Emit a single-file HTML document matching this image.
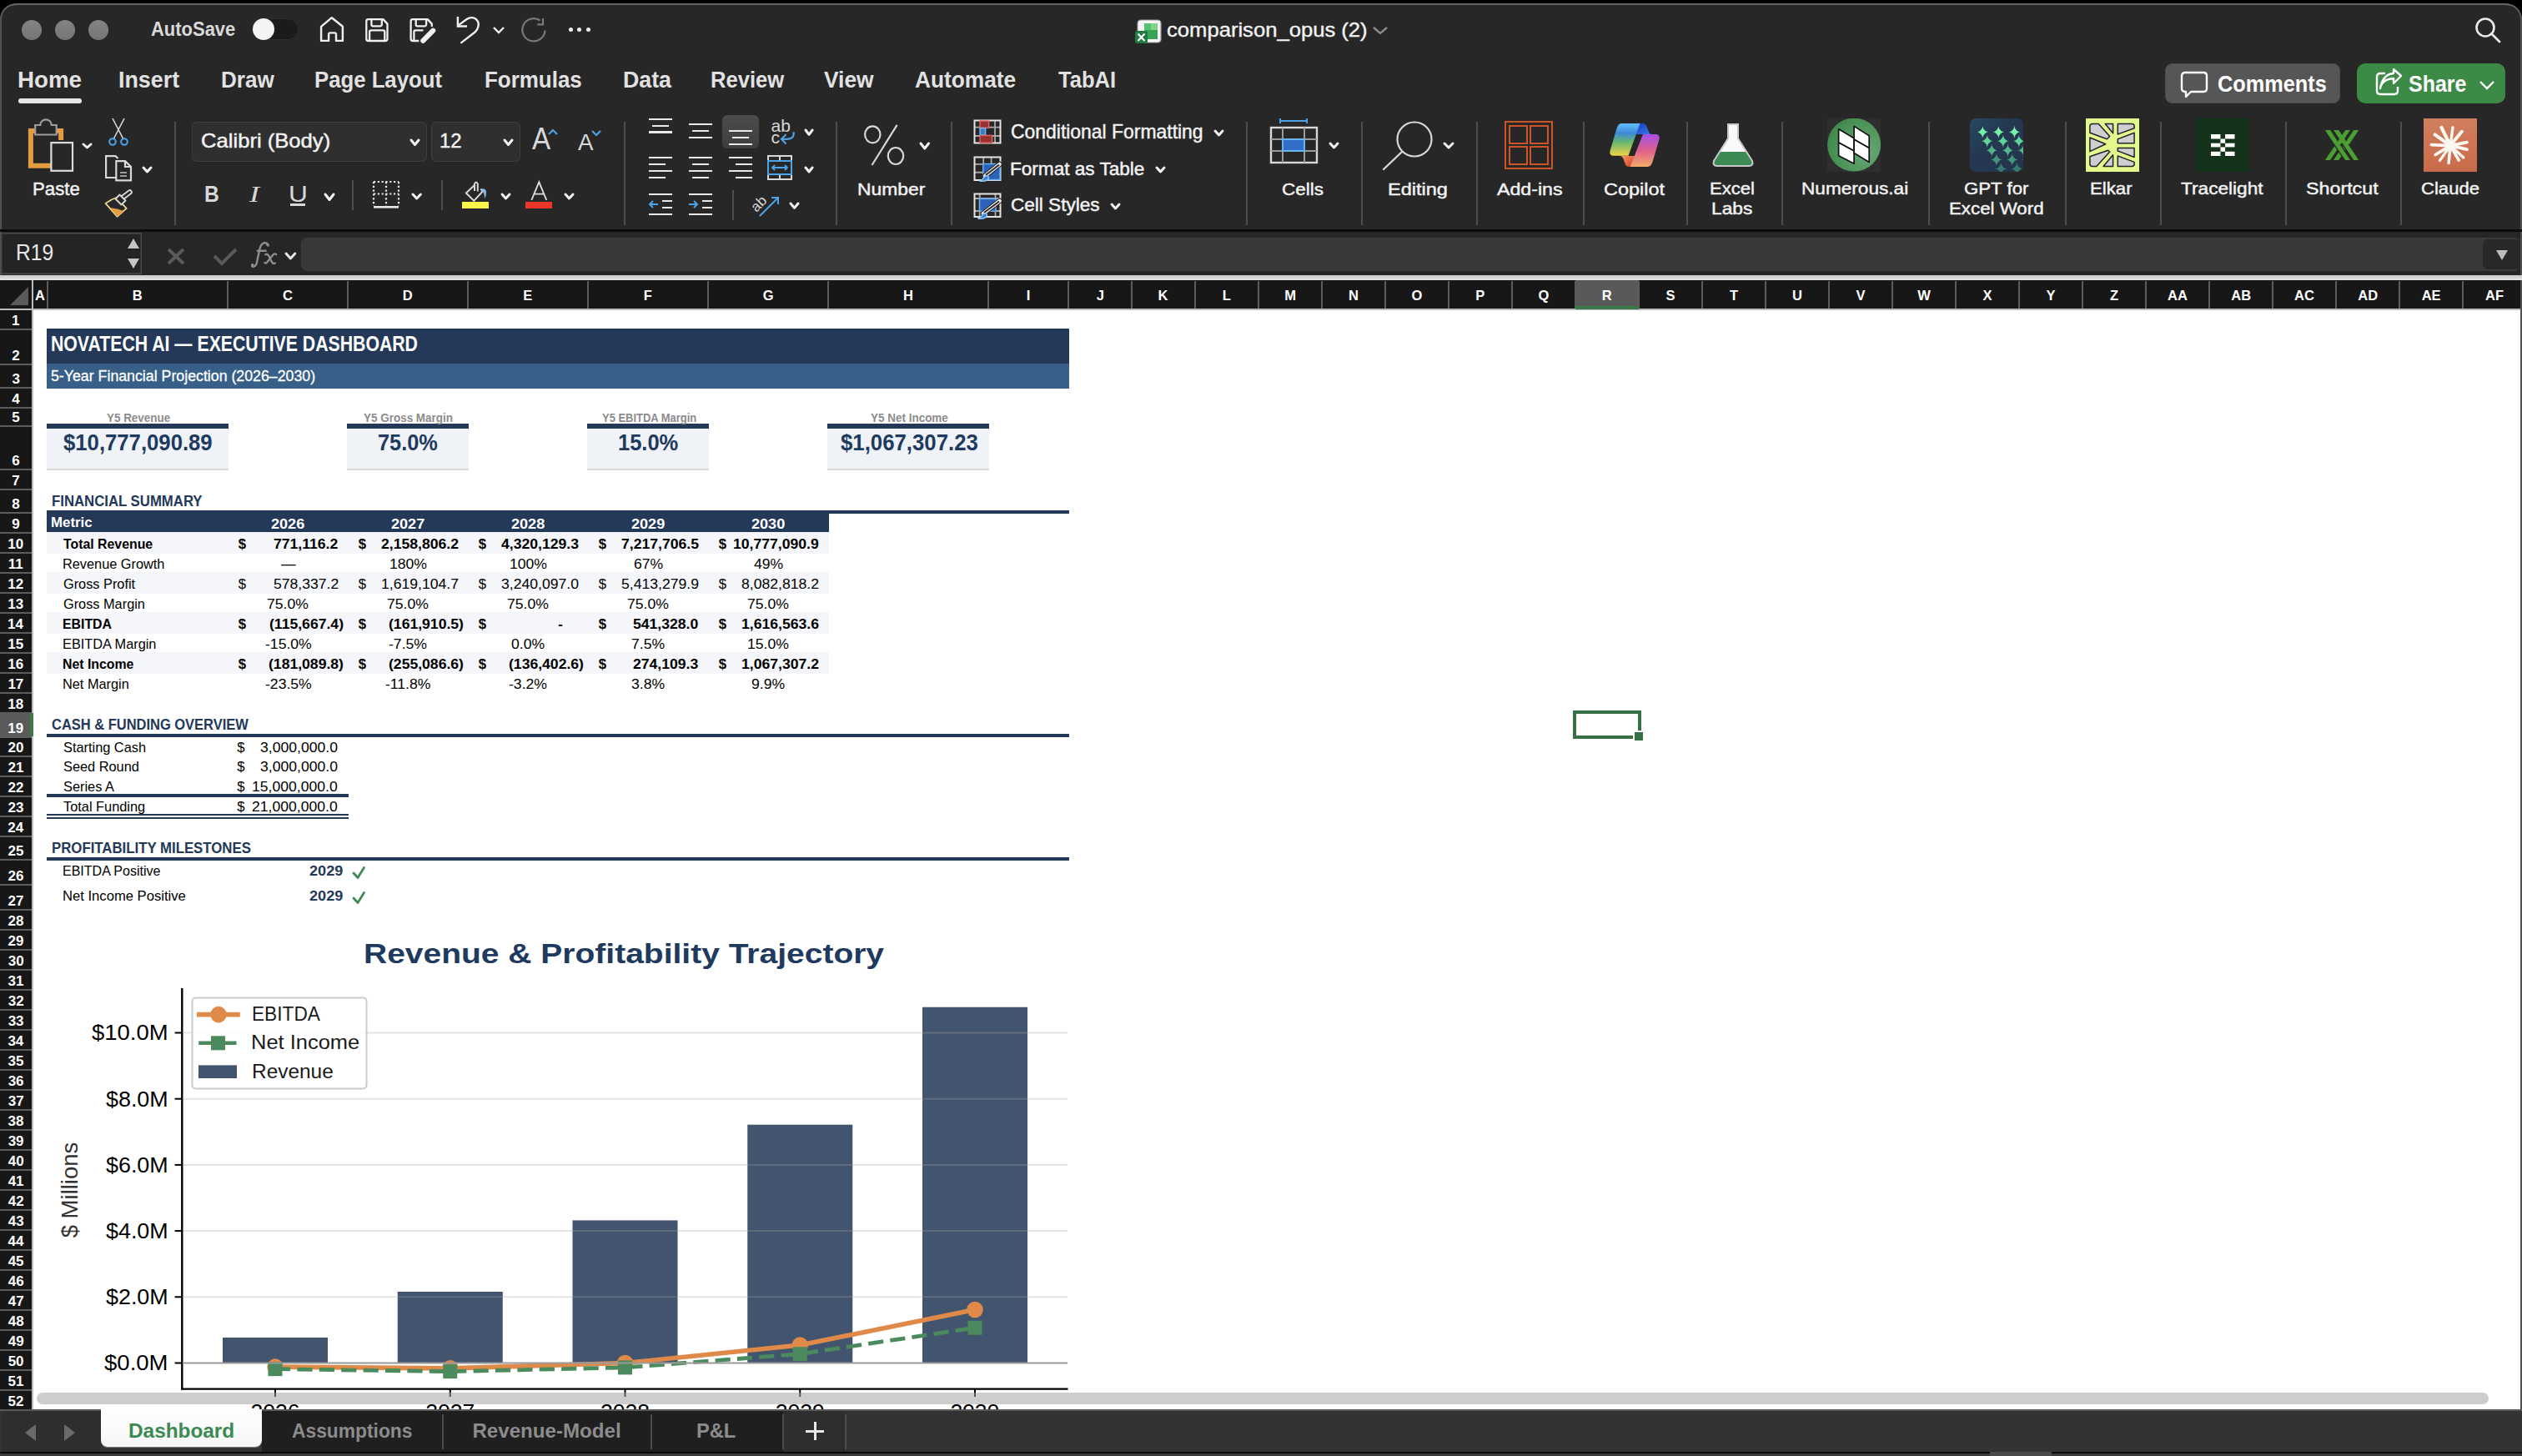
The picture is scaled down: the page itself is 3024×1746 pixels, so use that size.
<!DOCTYPE html>
<html><head><meta charset="utf-8"><style>
html,body{margin:0;padding:0;width:3024px;height:1746px;overflow:hidden;background:#000;}
#w{position:absolute;left:0;top:0;width:3024px;height:1746px;overflow:hidden;}
.t{position:absolute;white-space:pre;font-family:"Liberation Sans",sans-serif;}
.r{position:absolute;}
</style></head><body><div id="w">
<div class="r" style="left:0;top:4px;width:3024px;height:1742px;background:#272727;border-radius:20px 20px 0 0;box-shadow:inset 0 2px 0 #626262, inset 2px 0 0 #505050, inset -2px 0 0 #505050;"></div>
<div class="r" style="left:26px;top:24px;width:24px;height:24px;border-radius:50%;background:linear-gradient(#838383,#767676);"></div>
<div class="r" style="left:66px;top:24px;width:24px;height:24px;border-radius:50%;background:linear-gradient(#838383,#767676);"></div>
<div class="r" style="left:106px;top:24px;width:24px;height:24px;border-radius:50%;background:linear-gradient(#838383,#767676);"></div>
<div class="t" style="left:181.45px;top:24.31px;font-size:23.26px;line-height:23.26px;color:#dadada;font-weight:bold;transform:scaleX(0.9444);transform-origin:0 0;">AutoSave</div>
<div class="r" style="left:302px;top:22px;width:56px;height:26px;border-radius:13px;background:#1b1b1b;box-shadow:inset 0 0 0 1px #2e2e2e;"></div>
<div class="r" style="left:303px;top:22px;width:26px;height:26px;border-radius:50%;background:#f4f4f4;"></div>
<svg class="r" style="left:380.00px;top:18.00px;" width="36.00" height="34.00" viewBox="0 0 36 34"><path d="M5.1 30.9 V13.8 L17.8 3.2 L30.9 13.8 V30.9 H23 V23.2 A1.8 1.8 0 0 0 21.2 21.4 H15.9 A1.8 1.8 0 0 0 14.1 23.2 V30.9 Z" fill="none" stroke="#f0f0f0" stroke-width="2.4" stroke-linejoin="round"/></svg>
<svg class="r" style="left:436.00px;top:20.00px;" width="34.00" height="32.00" viewBox="0 0 34 32"><path d="M5.6 3.1 H23.4 L28.5 8.6 V26.8 A2.2 2.2 0 0 1 26.3 29 H5.6 A2.3 2.3 0 0 1 3.3 26.7 V5.4 A2.3 2.3 0 0 1 5.6 3.1Z M9.4 3.1 V9.5 A1.8 1.8 0 0 0 11.2 11.3 H20 A1.8 1.8 0 0 0 21.8 9.5 V3.1 M7.1 29 V18.2 A1.8 1.8 0 0 1 8.9 16.4 H23.5 A1.8 1.8 0 0 1 25.3 18.2 V29" fill="none" stroke="#f0f0f0" stroke-width="2.3" stroke-linejoin="round"/></svg>
<svg class="r" style="left:490.00px;top:20.00px;" width="36.00" height="34.00" viewBox="0 0 36 34"><path d="M12.5 29 H4.9 A2.3 2.3 0 0 1 2.6 26.7 V5.4 A2.3 2.3 0 0 1 4.9 3.1 H22.7 L27.8 8.6 V12.3 M8.7 3.1 V9.5 A1.8 1.8 0 0 0 10.5 11.3 H19.3 A1.8 1.8 0 0 0 21.1 9.5 V3.1 M6.4 29 V18.2 A1.8 1.8 0 0 1 8.2 16.4 H17.5" fill="none" stroke="#f0f0f0" stroke-width="2.3" stroke-linejoin="round"/><line x1="29.3" y1="16.6" x2="17.2" y2="28.8" stroke="#272727" stroke-width="9.5" stroke-linecap="round"/><line x1="29.3" y1="16.6" x2="17.2" y2="28.8" stroke="#f0f0f0" stroke-width="6" stroke-linecap="round"/></svg>
<svg class="r" style="left:545.00px;top:18.00px;" width="35.00" height="36.00" viewBox="0 0 35 36"><path d="M3.9 2.1 V13.5 H15" fill="none" stroke="#f0f0f0" stroke-width="2.4" stroke-linejoin="miter"/><path d="M4.6 12.4 L14.3 5.3 Q19.3 1.8 24.5 4 Q30 7.5 28.4 14 Q27.4 18 24.5 20.5 L8.2 33.1" fill="none" stroke="#f0f0f0" stroke-width="2.4" stroke-linecap="round"/></svg>
<svg class="r" style="left:590.00px;top:30.00px;" width="16.00" height="13.00" viewBox="0 0 16 13"><path d="M2 3 L8 9 L14 3" fill="none" stroke="#f0f0f0" stroke-width="2.4"/></svg>
<svg class="r" style="left:623.00px;top:20.00px;" width="33.00" height="34.00" viewBox="0 0 33 34"><path d="M30.5 16.5 A13.6 13.6 0 1 1 24.5 4.5" fill="none" stroke="#7a7a7a" stroke-width="2.2"/><path d="M28 1.9 V9.3 H21.2" fill="none" stroke="#7a7a7a" stroke-width="2.2"/></svg>
<div class="r" style="left:681.5px;top:33px;width:5px;height:5px;border-radius:50%;background:#f0f0f0;"></div>
<div class="r" style="left:692.0px;top:33px;width:5px;height:5px;border-radius:50%;background:#f0f0f0;"></div>
<div class="r" style="left:702.5px;top:33px;width:5px;height:5px;border-radius:50%;background:#f0f0f0;"></div>
<svg class="r" style="left:1360.00px;top:22.00px;" width="34.00" height="32.00" viewBox="0 0 34 32"><rect x="4" y="2" width="28" height="27" rx="4" fill="#f5f5f5" stroke="#9a9a9a" stroke-width="1.2"/><rect x="12" y="6" width="16" height="19" fill="#3aa356"/><rect x="20" y="6" width="8" height="8" fill="#7fd48b"/><rect x="12" y="6" width="8" height="8" fill="#56c06a"/><rect x="1" y="15" width="15" height="15" rx="2.5" fill="#1f7a3f"/><path d="M4.5 18.5 L12.5 27 M12.5 18.5 L4.5 27" stroke="#fff" stroke-width="2.2"/></svg>
<div class="t" style="left:1398.91px;top:23.78px;font-size:24.71px;line-height:24.71px;color:#f2f2f2;font-weight:normal;transform:scaleX(1.0369);transform-origin:0 0;-webkit-text-stroke:0.4px #f2f2f2;">comparison_opus (2)</div>
<svg class="r" style="left:1645.00px;top:30.00px;" width="20.00" height="12.00" viewBox="0 0 20 12"><path d="M2 3 L10 10 L18 3" fill="none" stroke="#8c8c8c" stroke-width="2.4"/></svg>
<svg class="r" style="left:2966.00px;top:20.00px;" width="36.00" height="32.00" viewBox="0 0 36 32"><circle cx="14" cy="13" r="10.5" fill="none" stroke="#eaeaea" stroke-width="2.6"/><path d="M21.5 20.5 L31 30" stroke="#eaeaea" stroke-width="2.8" stroke-linecap="round"/></svg>
<div class="t" style="left:20.95px;top:82.25px;font-size:28.05px;line-height:28.05px;color:#e2e2e2;font-weight:bold;transform:scaleX(0.9880);transform-origin:0 0;">Home</div>
<div class="t" style="left:142.20px;top:82.25px;font-size:28.05px;line-height:28.05px;color:#e2e2e2;font-weight:bold;transform:scaleX(0.9572);transform-origin:0 0;">Insert</div>
<div class="t" style="left:265.26px;top:82.25px;font-size:28.05px;line-height:28.05px;color:#e2e2e2;font-weight:bold;transform:scaleX(0.9285);transform-origin:0 0;">Draw</div>
<div class="t" style="left:377.28px;top:82.25px;font-size:28.05px;line-height:28.05px;color:#e2e2e2;font-weight:bold;transform:scaleX(0.9175);transform-origin:0 0;">Page Layout</div>
<div class="t" style="left:581.26px;top:82.25px;font-size:28.05px;line-height:28.05px;color:#e2e2e2;font-weight:bold;transform:scaleX(0.9251);transform-origin:0 0;">Formulas</div>
<div class="t" style="left:746.81px;top:82.25px;font-size:28.05px;line-height:28.05px;color:#e2e2e2;font-weight:bold;transform:scaleX(0.9542);transform-origin:0 0;">Data</div>
<div class="t" style="left:851.79px;top:82.25px;font-size:28.05px;line-height:28.05px;color:#e2e2e2;font-weight:bold;transform:scaleX(0.9119);transform-origin:0 0;">Review</div>
<div class="t" style="left:988.42px;top:82.25px;font-size:28.05px;line-height:28.05px;color:#e2e2e2;font-weight:bold;transform:scaleX(0.9387);transform-origin:0 0;">View</div>
<div class="t" style="left:1097.35px;top:82.25px;font-size:28.05px;line-height:28.05px;color:#e2e2e2;font-weight:bold;transform:scaleX(0.9366);transform-origin:0 0;">Automate</div>
<div class="t" style="left:1268.71px;top:82.25px;font-size:28.05px;line-height:28.05px;color:#e2e2e2;font-weight:bold;transform:scaleX(0.9097);transform-origin:0 0;">TabAI</div>
<div class="r" style="left:22px;top:118px;width:76px;height:6px;border-radius:3px;background:#e6e6e6;"></div>
<div class="r" style="left:2596px;top:76px;width:210px;height:48px;border-radius:9px;background:#565656;box-shadow:inset 0 0 0 1px #4c4c4c;"></div>
<svg class="r" style="left:2614.00px;top:84.00px;" width="36.00" height="34.00" viewBox="0 0 36 34"><path d="M6 3 H28 Q32 3 32 7 V22 Q32 26 28 26 H13 L7 32 V26 H6 Q2 26 2 22 V7 Q2 3 6 3 Z" fill="none" stroke="#fff" stroke-width="2.4" stroke-linejoin="round"/></svg>
<div class="t" style="left:2658.56px;top:87.07px;font-size:27.33px;line-height:27.33px;color:#ffffff;font-weight:bold;transform:scaleX(0.9261);transform-origin:0 0;">Comments</div>
<div class="r" style="left:2826px;top:76px;width:178px;height:48px;border-radius:10px;background:#3d8a47;"></div>
<svg class="r" style="left:2846.00px;top:82.00px;" width="36.00" height="34.00" viewBox="0 0 36 34"><path d="M14 6 H8 Q4 6 4 10 V27 Q4 31 8 31 H25 Q29 31 29 27 V22" fill="none" stroke="#fff" stroke-width="2.4"/><path d="M8 24 Q10 13 24 12 V18 L33 9 L24 1 V6 Q11 7 8 24 Z" fill="none" stroke="#fff" stroke-width="2.4" stroke-linejoin="round"/></svg>
<div class="t" style="left:2888.28px;top:87.07px;font-size:27.33px;line-height:27.33px;color:#ffffff;font-weight:bold;transform:scaleX(0.9134);transform-origin:0 0;">Share</div>
<svg class="r" style="left:2972.00px;top:95.00px;" width="20.00" height="13.00" viewBox="0 0 20 13"><path d="M2 3 L10 11 L18 3" fill="none" stroke="#fff" stroke-width="2.4"/></svg>
<svg class="r" style="left:30.00px;top:140.00px;" width="62.00" height="70.00" viewBox="0 0 62 70"><path d="M43.1 28 V17 H6.9 V58.7 H31" fill="none" stroke="#e39c3f" stroke-width="6"/><path d="M12.2 21.5 H37.7 V10 H31.7 A6.7 6.7 0 0 0 18.3 10 H12.2 Z" fill="#272727" stroke="#9c9c9c" stroke-width="2.2"/><rect x="31.4" y="31.1" width="25.6" height="33.7" fill="#272727" stroke="#dcdcdc" stroke-width="2.2"/></svg>
<svg class="r" style="left:96.50px;top:169.50px;" width="15.00" height="10.00" viewBox="0 0 15 10"><path d="M3 3 L7.5 7 L12 3" fill="none" stroke="#f4f4f4" stroke-width="3" stroke-linecap="round" stroke-linejoin="round"/></svg>
<div class="t" style="left:39.18px;top:215.54px;font-size:21.80px;line-height:21.80px;color:#f2f2f2;font-weight:normal;transform:scaleX(1.0190);transform-origin:0 0;-webkit-text-stroke:0.45px #f2f2f2;">Paste</div>
<svg class="r" style="left:128.00px;top:140.00px;" width="28.00" height="36.00" viewBox="0 0 28 36"><path d="M7 2 L20 27 M21 2 L8 27" stroke="#d8d8d8" stroke-width="1.6" fill="none"/><circle cx="7" cy="30" r="3.8" fill="none" stroke="#4da3e8" stroke-width="2"/><circle cx="21" cy="30" r="3.8" fill="none" stroke="#4da3e8" stroke-width="2"/></svg>
<svg class="r" style="left:124.00px;top:184.00px;" width="36.00" height="36.00" viewBox="0 0 36 36"><path d="M15 29 H3.1 V3.1 H14.5 L17.5 6" fill="none" stroke="#d8d8d8" stroke-width="2.2"/><path d="M15.3 9.1 H26 L33 16 V32.4 H15.3 Z M26 9.1 V16 H33" fill="#272727" stroke="#d8d8d8" stroke-width="2.2"/><path d="M20 23 H28 M20 27 H28" stroke="#9a9a9a" stroke-width="2"/></svg>
<svg class="r" style="left:168.50px;top:197.50px;" width="15.00" height="11.00" viewBox="0 0 15 11"><path d="M3 3 L7.5 8 L12 3" fill="none" stroke="#f4f4f4" stroke-width="3" stroke-linecap="round" stroke-linejoin="round"/></svg>
<svg class="r" style="left:122.00px;top:226.00px;" width="40.00" height="38.00" viewBox="0 0 40 38"><g transform="translate(2 2)"><path d="M2.6 15.9 Q9 11 15.6 9 L27.6 21.9 Q22 27 16.5 31.7 Z" fill="none" stroke="#f2d98c" stroke-width="1.8" stroke-linejoin="round"/><path d="M8 21 Q16 22 24.5 25 L16.5 31.7Z" fill="#e39c3f"/><line x1="23" y1="9" x2="31.5" y2="2.5" stroke="#d8d8d8" stroke-width="6.4" stroke-linecap="round"/><line x1="23" y1="9" x2="31.5" y2="2.5" stroke="#272727" stroke-width="2.8" stroke-linecap="round"/><path d="M14.5 10.5 L19.5 5.5 L26.5 12.5 L21.5 17.5Z" fill="#272727" stroke="#d8d8d8" stroke-width="1.8" stroke-linejoin="round"/></g></svg>
<div class="r" style="left:208.50px;top:146.00px;width:2.00px;height:124.00px;background:#4e4e4e;"></div>
<div class="r" style="left:230px;top:146px;width:282px;height:48px;border-radius:6px;background:#2f2f2f;box-shadow:inset 0 0 0 1px #3e3e3e;"></div>
<div class="t" style="left:241.40px;top:157.18px;font-size:24.13px;line-height:24.13px;color:#f2f2f2;font-weight:normal;transform:scaleX(1.0619);transform-origin:0 0;-webkit-text-stroke:0.45px #f2f2f2;">Calibri (Body)</div>
<svg class="r" style="left:489.50px;top:165.00px;" width="15.00" height="11.50" viewBox="0 0 15 11.5"><path d="M3 3 L7.5 8.5 L12 3" fill="none" stroke="#f4f4f4" stroke-width="3" stroke-linecap="round" stroke-linejoin="round"/></svg>
<div class="r" style="left:516.6px;top:146px;width:107px;height:48px;border-radius:6px;background:#2f2f2f;box-shadow:inset 0 0 0 1px #3e3e3e;"></div>
<div class="t" style="left:526.68px;top:157.08px;font-size:24.71px;line-height:24.71px;color:#f2f2f2;font-weight:normal;transform:scaleX(0.9647);transform-origin:0 0;-webkit-text-stroke:0.45px #f2f2f2;">12</div>
<svg class="r" style="left:601.50px;top:165.00px;" width="15.00" height="11.50" viewBox="0 0 15 11.5"><path d="M3 3 L7.5 8.5 L12 3" fill="none" stroke="#f4f4f4" stroke-width="3" stroke-linecap="round" stroke-linejoin="round"/></svg>
<div class="t" style="left:637.94px;top:149.24px;font-size:36.34px;line-height:36.34px;color:#d8d8d8;font-weight:normal;transform:scaleX(0.9131);transform-origin:0 0;">A</div>
<svg class="r" style="left:656.00px;top:153.00px;" width="14.00" height="10.00" viewBox="0 0 14 10"><path d="M2 8 L7 3 L12 8" fill="none" stroke="#4da3e8" stroke-width="2.2"/></svg>
<div class="t" style="left:692.55px;top:156.01px;font-size:28.34px;line-height:28.34px;color:#d8d8d8;font-weight:normal;transform:scaleX(0.9790);transform-origin:0 0;">A</div>
<svg class="r" style="left:708.00px;top:154.00px;" width="14.00" height="10.00" viewBox="0 0 14 10"><path d="M2 3 L7 8 L12 3" fill="none" stroke="#4da3e8" stroke-width="2.2"/></svg>
<div class="t" style="left:245.35px;top:218.62px;font-size:27.62px;line-height:27.62px;color:#d8d8d8;font-weight:bold;transform:scaleX(0.8906);transform-origin:0 0;">B</div>
<div class="t" style="left:299.14px;top:218.62px;font-size:27.62px;line-height:27.62px;color:#d8d8d8;font-weight:normal;font-style:italic;font-family:'Liberation Serif', serif;transform:scaleX(1.3002);transform-origin:0 0;">I</div>
<div class="t" style="left:345.55px;top:218.62px;font-size:27.62px;line-height:27.62px;color:#d8d8d8;font-weight:normal;transform:scaleX(1.1478);transform-origin:0 0;">U</div>
<div class="r" style="left:348.00px;top:244.00px;width:18.00px;height:2.50px;background:#d8d8d8;"></div>
<svg class="r" style="left:386.50px;top:229.50px;" width="16.00" height="12.50" viewBox="0 0 16 12.5"><path d="M3 3 L8 9.5 L13 3" fill="none" stroke="#f4f4f4" stroke-width="3" stroke-linecap="round" stroke-linejoin="round"/></svg>
<div class="r" style="left:422.00px;top:216.00px;width:2.00px;height:36.00px;background:#4e4e4e;"></div>
<svg class="r" style="left:446.00px;top:216.00px;" width="34.00" height="34.00" viewBox="0 0 34 34"><g fill="#e8e8e8"><rect x="2" y="31" width="30" height="2.6"/></g><g stroke="#e8e8e8" stroke-width="2.2" stroke-dasharray="2.2 2.6" fill="none"><path d="M2 2 H32 M2 2 V31 M32 2 V31 M17 2 V31 M2 16.5 H32"/></g></svg>
<svg class="r" style="left:492.10px;top:229.50px;" width="15.40" height="11.00" viewBox="0 0 15.4 11"><path d="M3 3 L7.7 8 L12.4 3" fill="none" stroke="#f4f4f4" stroke-width="3" stroke-linecap="round" stroke-linejoin="round"/></svg>
<div class="r" style="left:528.50px;top:216.00px;width:2.00px;height:36.00px;background:#4e4e4e;"></div>
<svg class="r" style="left:552.00px;top:212.00px;" width="40.00" height="34.00" viewBox="0 0 40 34"><path d="M16.9 9.9 L6.9 19.4 L16.3 28.8 L26.9 17.2 L24.3 14.6" fill="none" stroke="#d8d8d8" stroke-width="2" stroke-linejoin="miter"/><path d="M17 17 V8.5 Q18.9 4.5 20.8 8.5 V17.6" fill="none" stroke="#d8d8d8" stroke-width="2"/><path d="M24.3 14.6 Q29.8 13.4 31 17.2 Q31.4 22 29.4 26.3 Q28.8 20.5 26.9 17.2 Z" fill="#86b8e8"/></svg>
<div class="r" style="left:554.00px;top:242.00px;width:32.00px;height:8.00px;background:#fdf64a;"></div>
<svg class="r" style="left:598.50px;top:229.50px;" width="15.00" height="11.00" viewBox="0 0 15 11"><path d="M3 3 L7.5 8 L12 3" fill="none" stroke="#f4f4f4" stroke-width="3" stroke-linecap="round" stroke-linejoin="round"/></svg>
<svg class="r" style="left:630.00px;top:214.00px;" width="34.00" height="30.00" viewBox="0 0 34 30"><path d="M7.3 26 L16.3 4.3 L25.3 26 M10.6 18.6 H22" fill="none" stroke="#dcdcdc" stroke-width="1.9"/></svg>
<div class="r" style="left:630.00px;top:242.00px;width:32.00px;height:8.00px;background:#e8362a;"></div>
<svg class="r" style="left:674.50px;top:229.50px;" width="15.00" height="11.00" viewBox="0 0 15 11"><path d="M3 3 L7.5 8 L12 3" fill="none" stroke="#f4f4f4" stroke-width="3" stroke-linecap="round" stroke-linejoin="round"/></svg>
<div class="r" style="left:748.00px;top:146.00px;width:2.00px;height:124.00px;background:#4e4e4e;"></div>
<div class="r" style="left:778.00px;top:141.60px;width:28.00px;height:2.20px;background:#e8e8e8;"></div>
<div class="r" style="left:782.00px;top:149.50px;width:20.00px;height:2.20px;background:#e8e8e8;"></div>
<div class="r" style="left:778.00px;top:157.40px;width:28.00px;height:2.20px;background:#e8e8e8;"></div>
<div class="r" style="left:826.00px;top:147.90px;width:28.00px;height:2.20px;background:#e8e8e8;"></div>
<div class="r" style="left:830.00px;top:155.90px;width:20.00px;height:2.20px;background:#e8e8e8;"></div>
<div class="r" style="left:826.00px;top:163.90px;width:28.00px;height:2.20px;background:#e8e8e8;"></div>
<div class="r" style="left:866px;top:138px;width:44px;height:39.6px;border-radius:6px;background:linear-gradient(#4c4c4c,#3e3e3e);"></div>
<div class="r" style="left:874.00px;top:155.90px;width:28.00px;height:2.20px;background:#e8e8e8;"></div>
<div class="r" style="left:878.00px;top:163.90px;width:20.00px;height:2.20px;background:#e8e8e8;"></div>
<div class="r" style="left:874.00px;top:171.90px;width:28.00px;height:2.20px;background:#e8e8e8;"></div>
<svg class="r" style="left:920.00px;top:138.00px;" width="36.00" height="38.00" viewBox="0 0 36 38"><text x="4.5" y="20" font-family="Liberation Sans" font-size="21" fill="#d8d8d8">ab</text><text x="4.5" y="34.2" font-family="Liberation Sans" font-size="21" fill="#d8d8d8">c</text><path d="M31.5 20.3 Q33 28.8 23 28.8 H17.2 M22.5 23.2 L17 28.8 L22.5 34.4" fill="none" stroke="#4da3e8" stroke-width="2.2"/></svg>
<svg class="r" style="left:963.10px;top:153.10px;" width="14.10" height="11.40" viewBox="0 0 14.1 11.4"><path d="M3 3 L7.05 8.4 L11.1 3" fill="none" stroke="#f4f4f4" stroke-width="3" stroke-linecap="round" stroke-linejoin="round"/></svg>
<div class="r" style="left:778.00px;top:187.90px;width:28.00px;height:2.20px;background:#e8e8e8;"></div>
<div class="r" style="left:778.00px;top:195.90px;width:20.00px;height:2.20px;background:#e8e8e8;"></div>
<div class="r" style="left:778.00px;top:203.90px;width:28.00px;height:2.20px;background:#e8e8e8;"></div>
<div class="r" style="left:778.00px;top:211.90px;width:20.00px;height:2.20px;background:#e8e8e8;"></div>
<div class="r" style="left:826.00px;top:187.90px;width:28.00px;height:2.20px;background:#e8e8e8;"></div>
<div class="r" style="left:830.00px;top:195.90px;width:20.00px;height:2.20px;background:#e8e8e8;"></div>
<div class="r" style="left:826.00px;top:203.90px;width:28.00px;height:2.20px;background:#e8e8e8;"></div>
<div class="r" style="left:830.00px;top:211.90px;width:20.00px;height:2.20px;background:#e8e8e8;"></div>
<div class="r" style="left:874.00px;top:187.90px;width:28.00px;height:2.20px;background:#e8e8e8;"></div>
<div class="r" style="left:882.00px;top:195.90px;width:20.00px;height:2.20px;background:#e8e8e8;"></div>
<div class="r" style="left:874.00px;top:203.90px;width:28.00px;height:2.20px;background:#e8e8e8;"></div>
<div class="r" style="left:882.00px;top:211.90px;width:20.00px;height:2.20px;background:#e8e8e8;"></div>
<svg class="r" style="left:918.00px;top:184.00px;" width="34.00" height="34.00" viewBox="0 0 34 34"><rect x="3" y="3" width="28" height="28" fill="none" stroke="#d8d8d8" stroke-width="2"/><path d="M17 3 V9 M17 25 V31" stroke="#d8d8d8" stroke-width="2"/><rect x="3" y="9" width="28" height="16" fill="none" stroke="#4da3e8" stroke-width="2"/><path d="M8 17 H26 M11 14 L8 17 L11 20 M23 14 L26 17 L23 20" fill="none" stroke="#4da3e8" stroke-width="1.8"/></svg>
<svg class="r" style="left:963.10px;top:197.50px;" width="14.10" height="11.00" viewBox="0 0 14.1 11"><path d="M3 3 L7.05 8 L11.1 3" fill="none" stroke="#f4f4f4" stroke-width="3" stroke-linecap="round" stroke-linejoin="round"/></svg>
<div class="r" style="left:778.00px;top:231.90px;width:28.00px;height:2.20px;background:#e8e8e8;"></div>
<div class="r" style="left:794.00px;top:239.90px;width:12.00px;height:2.20px;background:#e8e8e8;"></div>
<div class="r" style="left:794.00px;top:247.90px;width:12.00px;height:2.20px;background:#e8e8e8;"></div>
<div class="r" style="left:778.00px;top:255.90px;width:28.00px;height:2.20px;background:#e8e8e8;"></div>
<svg class="r" style="left:777.00px;top:239.00px;" width="14.00" height="12.00" viewBox="0 0 14 12"><path d="M12 6 H2 M6 2 L2 6 L6 10" fill="none" stroke="#4da3e8" stroke-width="2"/></svg>
<div class="r" style="left:826.00px;top:231.90px;width:28.00px;height:2.20px;background:#e8e8e8;"></div>
<div class="r" style="left:842.00px;top:239.90px;width:12.00px;height:2.20px;background:#e8e8e8;"></div>
<div class="r" style="left:842.00px;top:247.90px;width:12.00px;height:2.20px;background:#e8e8e8;"></div>
<div class="r" style="left:826.00px;top:255.90px;width:28.00px;height:2.20px;background:#e8e8e8;"></div>
<svg class="r" style="left:825.00px;top:239.00px;" width="14.00" height="12.00" viewBox="0 0 14 12"><path d="M1 6 H11 M7 2 L11 6 L7 10" fill="none" stroke="#4da3e8" stroke-width="2"/></svg>
<div class="r" style="left:878.00px;top:228.00px;width:2.00px;height:36.00px;background:#4e4e4e;"></div>
<svg class="r" style="left:900.00px;top:228.00px;" width="36.00" height="34.00" viewBox="0 0 36 34"><text x="0" y="0" font-family="Liberation Sans" font-size="17" fill="#d8d8d8" transform="translate(7 27) rotate(-45)">ab</text><path d="M11 31 L33 9 M25 9 H33 V17" fill="none" stroke="#4da3e8" stroke-width="2"/></svg>
<svg class="r" style="left:944.50px;top:241.10px;" width="15.00" height="11.40" viewBox="0 0 15 11.4"><path d="M3 3 L7.5 8.4 L12 3" fill="none" stroke="#f4f4f4" stroke-width="3" stroke-linecap="round" stroke-linejoin="round"/></svg>
<div class="r" style="left:1002.00px;top:146.00px;width:2.00px;height:124.00px;background:#4e4e4e;"></div>
<svg class="r" style="left:1032.00px;top:148.00px;" width="56.00" height="52.00" viewBox="0 0 56 52"><ellipse cx="14.3" cy="13.3" rx="9.2" ry="10" fill="none" stroke="#d8d8d8" stroke-width="2.2"/><ellipse cx="42" cy="39" rx="9.2" ry="10" fill="none" stroke="#d8d8d8" stroke-width="2.2"/><path d="M43.6 1.8 L13.5 50" stroke="#d8d8d8" stroke-width="2.2"/></svg>
<svg class="r" style="left:1100.50px;top:168.50px;" width="15.50" height="12.00" viewBox="0 0 15.5 12"><path d="M3 3 L7.75 9 L12.5 3" fill="none" stroke="#f4f4f4" stroke-width="3" stroke-linecap="round" stroke-linejoin="round"/></svg>
<div class="t" style="left:1028.13px;top:216.77px;font-size:20.35px;line-height:20.35px;color:#f2f2f2;font-weight:normal;transform:scaleX(1.1227);transform-origin:0 0;-webkit-text-stroke:0.45px #f2f2f2;">Number</div>
<div class="r" style="left:1140.00px;top:146.00px;width:2.00px;height:124.00px;background:#4e4e4e;"></div>
<svg class="r" style="left:1166.00px;top:142.00px;" width="36.00" height="32.00" viewBox="0 0 36 32"><path d="M2.5 10.7 H33.5 M2.5 21 H33.5 M27 2.5 V29.5" stroke="#a8a8a8" stroke-width="1.8"/><rect x="2.5" y="2.5" width="31" height="27" fill="none" stroke="#e4e4e4" stroke-width="2"/><rect x="9" y="3" width="10.6" height="8.4" fill="#983232" stroke="#e06464" stroke-width="1.4"/><rect x="9" y="11.6" width="6.6" height="8.4" fill="#3a7ec0" stroke="#7ab8ea" stroke-width="1.4"/><rect x="9" y="20.4" width="14.6" height="8.8" fill="#983232" stroke="#e06464" stroke-width="1.4"/></svg>
<div class="t" style="left:1211.84px;top:146.81px;font-size:23.26px;line-height:23.26px;color:#f2f2f2;font-weight:normal;transform:scaleX(0.9858);transform-origin:0 0;-webkit-text-stroke:0.45px #f2f2f2;">Conditional Formatting</div>
<svg class="r" style="left:1453.50px;top:153.50px;" width="15.00" height="11.00" viewBox="0 0 15 11"><path d="M3 3 L7.5 8 L12 3" fill="none" stroke="#f4f4f4" stroke-width="3" stroke-linecap="round" stroke-linejoin="round"/></svg>
<svg class="r" style="left:1166.00px;top:186.00px;" width="36.00" height="34.00" viewBox="0 0 36 34"><path d="M2.5 10.9 H33.5 M2.5 20.75 H33.5 M13.2 2.5 V29.5 M22.6 2.5 V29.5" stroke="#a8a8a8" stroke-width="1.8"/><rect x="2.5" y="2.5" width="31" height="27.5" fill="none" stroke="#e4e4e4" stroke-width="2"/><rect x="12.8" y="10.5" width="20.2" height="19" fill="#2c62b8" stroke="#6ab0f0" stroke-width="1.4"/><path d="M15 25 Q23.75 18 32.5 11" fill="none" stroke="#1c1c1c" stroke-width="6.4" stroke-linecap="round"/><path d="M15 25 Q23.75 18 32.5 11" fill="none" stroke="#e8e8e8" stroke-width="4.6" stroke-linecap="round"/><path d="M16.5 23.5 Q23.75 18 31.5 12" fill="none" stroke="#2a2a2a" stroke-width="1.8" stroke-linecap="round"/><path d="M8.5 31 Q12 30 13.5 27.5 Q14.5 24.5 17.5 24.8 Q20.5 25.5 19 28.5 Q16.5 32 8.5 31Z" fill="#3a7ed0" stroke="#90c8f4" stroke-width="1.4"/></svg>
<div class="t" style="left:1211.15px;top:191.54px;font-size:21.80px;line-height:21.80px;color:#f2f2f2;font-weight:normal;transform:scaleX(1.0355);transform-origin:0 0;-webkit-text-stroke:0.45px #f2f2f2;">Format as Table</div>
<svg class="r" style="left:1383.50px;top:197.50px;" width="15.00" height="11.00" viewBox="0 0 15 11"><path d="M3 3 L7.5 8 L12 3" fill="none" stroke="#f4f4f4" stroke-width="3" stroke-linecap="round" stroke-linejoin="round"/></svg>
<svg class="r" style="left:1166.00px;top:230.00px;" width="36.00" height="34.00" viewBox="0 0 36 34"><path d="M2.5 8 H33.5 M2.5 23 H33.5 M8.7 2.5 V29.5 M27.5 2.5 V29.5" stroke="#a8a8a8" stroke-width="1.8"/><rect x="2.5" y="2.5" width="31" height="27.5" fill="none" stroke="#e4e4e4" stroke-width="2"/><rect x="8.6" y="8.4" width="19.4" height="14.8" fill="#2c62b8" stroke="#6ab0f0" stroke-width="1.4"/><path d="M13 26 Q22.75 18.5 32.5 11" fill="none" stroke="#1c1c1c" stroke-width="6.4" stroke-linecap="round"/><path d="M13 26 Q22.75 18.5 32.5 11" fill="none" stroke="#e8e8e8" stroke-width="4.6" stroke-linecap="round"/><path d="M14.5 24.5 Q22.75 18.5 31.5 12" fill="none" stroke="#2a2a2a" stroke-width="1.8" stroke-linecap="round"/><path d="M6.5 32 Q10 31 11.5 28.5 Q12.5 25.5 15.5 25.8 Q18.5 26.5 17 29.5 Q14.5 33 6.5 32Z" fill="#3a7ed0" stroke="#90c8f4" stroke-width="1.4"/></svg>
<div class="t" style="left:1211.85px;top:235.24px;font-size:21.80px;line-height:21.80px;color:#f2f2f2;font-weight:normal;transform:scaleX(1.0347);transform-origin:0 0;-webkit-text-stroke:0.45px #f2f2f2;">Cell Styles</div>
<svg class="r" style="left:1329.50px;top:241.50px;" width="15.00" height="11.00" viewBox="0 0 15 11"><path d="M3 3 L7.5 8 L12 3" fill="none" stroke="#f4f4f4" stroke-width="3" stroke-linecap="round" stroke-linejoin="round"/></svg>
<div class="r" style="left:1493.70px;top:146.00px;width:2.00px;height:124.00px;background:#4e4e4e;"></div>
<svg class="r" style="left:1520.00px;top:140.00px;" width="62.00" height="58.00" viewBox="0 0 62 58"><path d="M15 5 H47 M15 2 V8 M47 2 V8" stroke="#4da3e8" stroke-width="2" fill="none"/><rect x="4" y="13" width="55" height="42" fill="none" stroke="#d8d8d8" stroke-width="2.4"/><path d="M4 27 H59 M4 41 H59 M18 13 V55 M44 13 V55" stroke="#9a9a9a" stroke-width="2"/><rect x="18" y="27" width="26" height="14" fill="#2f6fc8" stroke="#6ab4f0" stroke-width="2"/></svg>
<svg class="r" style="left:1591.50px;top:169.10px;" width="15.00" height="11.00" viewBox="0 0 15 11"><path d="M3 3 L7.5 8 L12 3" fill="none" stroke="#f4f4f4" stroke-width="3" stroke-linecap="round" stroke-linejoin="round"/></svg>
<div class="t" style="left:1536.56px;top:215.66px;font-size:21.08px;line-height:21.08px;color:#f2f2f2;font-weight:normal;transform:scaleX(1.0642);transform-origin:0 0;-webkit-text-stroke:0.45px #f2f2f2;">Cells</div>
<div class="r" style="left:1632.00px;top:146.00px;width:2.00px;height:124.00px;background:#4e4e4e;"></div>
<svg class="r" style="left:1656.00px;top:144.00px;" width="64.00" height="62.00" viewBox="0 0 64 62"><circle cx="40" cy="23" r="20.5" fill="none" stroke="#d8d8d8" stroke-width="2.2"/><path d="M25 38 L3 59" stroke="#d8d8d8" stroke-width="2.4" stroke-linecap="round"/></svg>
<svg class="r" style="left:1728.50px;top:169.10px;" width="16.00" height="11.00" viewBox="0 0 16 11"><path d="M3 3 L8 8 L13 3" fill="none" stroke="#f4f4f4" stroke-width="3" stroke-linecap="round" stroke-linejoin="round"/></svg>
<div class="t" style="left:1663.57px;top:215.66px;font-size:21.08px;line-height:21.08px;color:#f2f2f2;font-weight:normal;transform:scaleX(1.1165);transform-origin:0 0;-webkit-text-stroke:0.45px #f2f2f2;">Editing</div>
<div class="r" style="left:1770.00px;top:146.00px;width:2.00px;height:124.00px;background:#4e4e4e;"></div>
<svg class="r" style="left:1802.00px;top:143.00px;" width="62.00" height="62.00" viewBox="0 0 62 62"><rect x="3" y="3" width="56" height="56" fill="none" stroke="#d4582a" stroke-width="1.9"/><rect x="8" y="8" width="21" height="21" fill="none" stroke="#d4582a" stroke-width="1.9"/><rect x="33" y="8" width="21" height="21" fill="none" stroke="#d4582a" stroke-width="1.9"/><rect x="8" y="33" width="21" height="21" fill="none" stroke="#d4582a" stroke-width="1.9"/><rect x="33" y="33" width="21" height="21" fill="none" stroke="#d4582a" stroke-width="1.9"/></svg>
<div class="t" style="left:1794.95px;top:215.66px;font-size:21.08px;line-height:21.08px;color:#f2f2f2;font-weight:normal;transform:scaleX(1.0997);transform-origin:0 0;-webkit-text-stroke:0.45px #f2f2f2;">Add-ins</div>
<div class="r" style="left:1898.00px;top:146.00px;width:2.00px;height:124.00px;background:#4e4e4e;"></div>
<svg class="r" style="left:1920.00px;top:140.00px;" width="80.00" height="70.00" viewBox="0 0 80 70"><defs><linearGradient id="cpa" x1="0" y1="0" x2="0" y2="1"><stop offset="0" stop-color="#62c0fa"/><stop offset=".3" stop-color="#3d8ad8"/><stop offset=".6" stop-color="#6cb86a"/><stop offset="1" stop-color="#f2d448"/></linearGradient><linearGradient id="cpb" x1="0" y1="0" x2="0" y2="1"><stop offset="0" stop-color="#a24ee6"/><stop offset=".5" stop-color="#e0608e"/><stop offset="1" stop-color="#f2aa68"/></linearGradient><linearGradient id="cpc" x1="0" y1="0" x2="1" y2="1"><stop offset="0" stop-color="#1632c0"/><stop offset="1" stop-color="#3a80e8"/></linearGradient><linearGradient id="cpd" x1="0" y1="0" x2="1" y2="1"><stop offset="0" stop-color="#f49a60"/><stop offset="1" stop-color="#d83a2a"/></linearGradient></defs><path d="M42 8 H50 Q53.5 8 55 13 L57 18 Q58 21 61 21 H39Z" fill="url(#cpc)"/><path d="M23 47 H41 L36 59.8 H32 Q29.5 59.8 28.5 56 L26.5 50.5 Q25.5 47.5 23 47Z" fill="url(#cpd)"/><path d="M24 8 H46.5 L32.5 46.8 H14.5 Q9.5 46.8 10.5 41 L18.5 14 Q20.5 8 24 8Z" fill="url(#cpa)"/><path d="M50 21 H65.5 Q70.5 21 69.5 27 L61.5 54 Q59.5 59.9 55.5 59.9 H34.6Z" fill="url(#cpb)"/></svg>
<div class="t" style="left:1922.81px;top:215.66px;font-size:21.08px;line-height:21.08px;color:#f2f2f2;font-weight:normal;transform:scaleX(1.1122);transform-origin:0 0;-webkit-text-stroke:0.45px #f2f2f2;">Copilot</div>
<div class="r" style="left:2022.40px;top:146.00px;width:2.00px;height:124.00px;background:#4e4e4e;"></div>
<svg class="r" style="left:2052.00px;top:146.00px;" width="52.00" height="56.00" viewBox="0 0 52 56"><path d="M20 3 H32 V20 L49 47 Q51 53 45 53 H7 Q1 53 3 47 L20 20 Z" fill="#fafafa" stroke="#c8c8c8" stroke-width="2"/><path d="M11 36 H41 L48 47 Q50 52 45 52 H7 Q2 52 4 47 Z" fill="#3e8a55"/></svg>
<div class="t" style="left:2049.89px;top:215.91px;font-size:20.78px;line-height:20.78px;color:#f2f2f2;font-weight:normal;transform:scaleX(1.0601);transform-origin:0 0;-webkit-text-stroke:0.45px #f2f2f2;">Excel</div>
<div class="t" style="left:2051.84px;top:239.71px;font-size:20.78px;line-height:20.78px;color:#f2f2f2;font-weight:normal;transform:scaleX(1.0935);transform-origin:0 0;-webkit-text-stroke:0.45px #f2f2f2;">Labs</div>
<div class="r" style="left:2136.00px;top:146.00px;width:2.00px;height:124.00px;background:#4e4e4e;"></div>
<svg class="r" style="left:2191.00px;top:142.00px;" width="64.00" height="64.00" viewBox="0 0 64 64"><defs><radialGradient id="ng" cx=".72" cy=".62" r=".75"><stop offset="0" stop-color="#6aa878"/><stop offset="1" stop-color="#3f8a4a"/></radialGradient></defs><rect width="64" height="64" fill="#2e2e2e"/><circle cx="32.1" cy="31.6" r="32" fill="url(#ng)"/><g fill="#fff" stroke="#111" stroke-width="1.7" stroke-linejoin="round"><path d="M13.6 12.8 L32.1 23.7 V39.1 L13.6 28.9Z"/><path d="M13.6 28.9 L32.1 39.1 V54.2 L13.6 44.8Z"/><path d="M32.1 9.4 L50.2 20.8 V35.6 L32.1 25.2Z"/><path d="M32.1 25.2 L50.2 35.6 V52.4 L32.1 41.5Z"/></g></svg>
<div class="t" style="left:2159.94px;top:215.91px;font-size:20.78px;line-height:20.78px;color:#f2f2f2;font-weight:normal;transform:scaleX(1.0887);transform-origin:0 0;-webkit-text-stroke:0.45px #f2f2f2;">Numerous.ai</div>
<div class="r" style="left:2312.00px;top:146.00px;width:2.00px;height:124.00px;background:#4e4e4e;"></div>
<svg class="r" style="left:2362.00px;top:142.00px;" width="64.00" height="64.00" viewBox="0 0 64 64"><defs><clipPath id="gc"><rect width="64" height="64" rx="7"/></clipPath><linearGradient id="gbg" x1="0" y1="0" x2="1" y2="1"><stop offset="0" stop-color="#264a62"/><stop offset=".4" stop-color="#253852"/><stop offset="1" stop-color="#24344e"/></linearGradient></defs><g clip-path="url(#gc)"><rect width="64" height="64" fill="url(#gbg)"/><path transform="translate(15.3 16.3) scale(1.1)" d="M0 -9.2 C0.7 -2.6 2.6 -0.7 8.2 0 C2.6 0.7 0.7 2.6 0 9.2 C-0.7 2.6 -2.6 0.7 -8.2 0 C-2.6 -0.7 -0.7 -2.6 0 -9.2Z" fill="#72f2aa" stroke="#26354c" stroke-width="0.9"/><path transform="translate(34.3 16.3) scale(1.1)" d="M0 -9.2 C0.7 -2.6 2.6 -0.7 8.2 0 C2.6 0.7 0.7 2.6 0 9.2 C-0.7 2.6 -2.6 0.7 -8.2 0 C-2.6 -0.7 -0.7 -2.6 0 -9.2Z" fill="#72f2aa" stroke="#26354c" stroke-width="0.9"/><path transform="translate(53.4 16.3) scale(1.1)" d="M0 -9.2 C0.7 -2.6 2.6 -0.7 8.2 0 C2.6 0.7 0.7 2.6 0 9.2 C-0.7 2.6 -2.6 0.7 -8.2 0 C-2.6 -0.7 -0.7 -2.6 0 -9.2Z" fill="#72f2aa" stroke="#26354c" stroke-width="0.9"/><path transform="translate(20.7 27.2) scale(1.1)" d="M0 -9.2 C0.7 -2.6 2.6 -0.7 8.2 0 C2.6 0.7 0.7 2.6 0 9.2 C-0.7 2.6 -2.6 0.7 -8.2 0 C-2.6 -0.7 -0.7 -2.6 0 -9.2Z" fill="#62d49a" stroke="#26354c" stroke-width="0.9"/><path transform="translate(39.8 27.2) scale(1.1)" d="M0 -9.2 C0.7 -2.6 2.6 -0.7 8.2 0 C2.6 0.7 0.7 2.6 0 9.2 C-0.7 2.6 -2.6 0.7 -8.2 0 C-2.6 -0.7 -0.7 -2.6 0 -9.2Z" fill="#62d49a" stroke="#26354c" stroke-width="0.9"/><path transform="translate(58.8 27.2) scale(1.1)" d="M0 -9.2 C0.7 -2.6 2.6 -0.7 8.2 0 C2.6 0.7 0.7 2.6 0 9.2 C-0.7 2.6 -2.6 0.7 -8.2 0 C-2.6 -0.7 -0.7 -2.6 0 -9.2Z" fill="#62d49a" stroke="#26354c" stroke-width="0.9"/><path transform="translate(26.2 38.3) scale(1.1)" d="M0 -9.2 C0.7 -2.6 2.6 -0.7 8.2 0 C2.6 0.7 0.7 2.6 0 9.2 C-0.7 2.6 -2.6 0.7 -8.2 0 C-2.6 -0.7 -0.7 -2.6 0 -9.2Z" fill="#52b48a" stroke="#26354c" stroke-width="0.9"/><path transform="translate(45.5 38.3) scale(1.1)" d="M0 -9.2 C0.7 -2.6 2.6 -0.7 8.2 0 C2.6 0.7 0.7 2.6 0 9.2 C-0.7 2.6 -2.6 0.7 -8.2 0 C-2.6 -0.7 -0.7 -2.6 0 -9.2Z" fill="#52b48a" stroke="#26354c" stroke-width="0.9"/><path transform="translate(64.3 38.3) scale(1.1)" d="M0 -9.2 C0.7 -2.6 2.6 -0.7 8.2 0 C2.6 0.7 0.7 2.6 0 9.2 C-0.7 2.6 -2.6 0.7 -8.2 0 C-2.6 -0.7 -0.7 -2.6 0 -9.2Z" fill="#52b48a" stroke="#26354c" stroke-width="0.9"/><path transform="translate(31.9 49.5) scale(1.1)" d="M0 -9.2 C0.7 -2.6 2.6 -0.7 8.2 0 C2.6 0.7 0.7 2.6 0 9.2 C-0.7 2.6 -2.6 0.7 -8.2 0 C-2.6 -0.7 -0.7 -2.6 0 -9.2Z" fill="#44967c" stroke="#26354c" stroke-width="0.9"/><path transform="translate(50.7 49.5) scale(1.1)" d="M0 -9.2 C0.7 -2.6 2.6 -0.7 8.2 0 C2.6 0.7 0.7 2.6 0 9.2 C-0.7 2.6 -2.6 0.7 -8.2 0 C-2.6 -0.7 -0.7 -2.6 0 -9.2Z" fill="#44967c" stroke="#26354c" stroke-width="0.9"/><path transform="translate(69.5 49.5) scale(1.1)" d="M0 -9.2 C0.7 -2.6 2.6 -0.7 8.2 0 C2.6 0.7 0.7 2.6 0 9.2 C-0.7 2.6 -2.6 0.7 -8.2 0 C-2.6 -0.7 -0.7 -2.6 0 -9.2Z" fill="#44967c" stroke="#26354c" stroke-width="0.9"/><path transform="translate(37.3 60.4) scale(1.1)" d="M0 -9.2 C0.7 -2.6 2.6 -0.7 8.2 0 C2.6 0.7 0.7 2.6 0 9.2 C-0.7 2.6 -2.6 0.7 -8.2 0 C-2.6 -0.7 -0.7 -2.6 0 -9.2Z" fill="#377c6e" stroke="#26354c" stroke-width="0.9"/><path transform="translate(56.4 60.4) scale(1.1)" d="M0 -9.2 C0.7 -2.6 2.6 -0.7 8.2 0 C2.6 0.7 0.7 2.6 0 9.2 C-0.7 2.6 -2.6 0.7 -8.2 0 C-2.6 -0.7 -0.7 -2.6 0 -9.2Z" fill="#377c6e" stroke="#26354c" stroke-width="0.9"/></g></svg>
<div class="t" style="left:2354.88px;top:215.91px;font-size:20.78px;line-height:20.78px;color:#f2f2f2;font-weight:normal;transform:scaleX(1.0706);transform-origin:0 0;-webkit-text-stroke:0.45px #f2f2f2;">GPT for</div>
<div class="t" style="left:2336.97px;top:239.71px;font-size:20.78px;line-height:20.78px;color:#f2f2f2;font-weight:normal;transform:scaleX(1.0735);transform-origin:0 0;-webkit-text-stroke:0.45px #f2f2f2;">Excel Word</div>
<div class="r" style="left:2476.00px;top:146.00px;width:2.00px;height:124.00px;background:#4e4e4e;"></div>
<svg class="r" style="left:2501.00px;top:142.00px;" width="64.00" height="64.00" viewBox="0 0 64 64"><rect width="64" height="64" fill="#e2f98c"/><g fill="#cfcfd2" stroke="#25222c" stroke-width="1.5" stroke-linejoin="round"><path d="M4.9 9.6 Q4.9 6.6 7.9 6.6 H15.3 L28.7 21.5 L25.4 24.7 L4.9 17.3Z"/><path d="M23.2 6.4 H32.6 V17.8Z"/><path d="M38.3 6.4 H55.1 Q58.1 6.4 58.1 9.4 V11.8 L38.3 19Z"/><path d="M4.9 23 L23.7 30.7 L4.9 39.6Z"/><path d="M38.3 24.7 L58.1 17.3 V29.7 H38.3Z"/><path d="M38.3 35.4 H58.1 V46.5 L38.3 39Z"/><path d="M4.9 45.8 L26.7 38.3 L28.7 40 L12.8 57.6 H7.9 Q4.9 57.6 4.9 54.6Z"/><path d="M21 57.6 L32.6 43.8 V57.6Z"/><path d="M38.3 45 L58.1 52.4 V54.6 Q58.1 57.6 55.1 57.6 H38.3Z"/></g></svg>
<div class="t" style="left:2505.78px;top:216.41px;font-size:20.78px;line-height:20.78px;color:#f2f2f2;font-weight:normal;transform:scaleX(1.0683);transform-origin:0 0;-webkit-text-stroke:0.45px #f2f2f2;">Elkar</div>
<div class="r" style="left:2590.00px;top:146.00px;width:2.00px;height:124.00px;background:#4e4e4e;"></div>
<svg class="r" style="left:2632.70px;top:142.00px;" width="64.10" height="64.00" viewBox="0 0 64.1 64"><rect width="64" height="64" fill="#15321a"/><g fill="#fff"><rect x="18" y="19" width="11.4" height="5.5"/><rect x="35.1" y="19" width="11.4" height="5.5"/><rect x="29.4" y="24.5" width="5.7" height="5.2"/><rect x="18" y="29.7" width="11.4" height="4.7"/><rect x="35.1" y="29.7" width="11.4" height="4.7"/><rect x="29.4" y="34.4" width="5.7" height="5.4"/><rect x="18" y="39.8" width="11.4" height="5.2"/><rect x="35.1" y="39.8" width="11.4" height="5.2"/></g></svg>
<div class="t" style="left:2615.49px;top:216.41px;font-size:20.78px;line-height:20.78px;color:#f2f2f2;font-weight:normal;transform:scaleX(1.0905);transform-origin:0 0;-webkit-text-stroke:0.45px #f2f2f2;">Tracelight</div>
<div class="r" style="left:2740.00px;top:146.00px;width:2.00px;height:124.00px;background:#4e4e4e;"></div>
<svg class="r" style="left:2786.00px;top:154.00px;" width="44.00" height="40.00" viewBox="0 0 44 40"><defs><clipPath id="scl"><rect x="0" y="19" width="44" height="21"/></clipPath></defs><g fill="#4a9e32"><path d="M26.3 2.1 H32 L8 38 H1.8Z"/><path d="M36.2 2.1 H42.2 L18.2 38 H12Z"/></g><g clip-path="url(#scl)" fill="none" stroke="#272727" stroke-width="2.6"><path d="M1.8 2.1 H8 L32 38 H26.1Z"/><path d="M12 2.1 H18.2 L42.2 38 H36.2Z"/></g><g fill="#4a9e32"><path d="M1.8 2.1 H8 L32 38 H26.1Z"/><path d="M12 2.1 H18.2 L42.2 38 H36.2Z"/></g></svg>
<div class="t" style="left:2765.44px;top:216.41px;font-size:20.78px;line-height:20.78px;color:#f2f2f2;font-weight:normal;transform:scaleX(1.1204);transform-origin:0 0;-webkit-text-stroke:0.45px #f2f2f2;">Shortcut</div>
<div class="r" style="left:2878.00px;top:146.00px;width:2.00px;height:124.00px;background:#4e4e4e;"></div>
<svg class="r" style="left:2906.00px;top:142.00px;" width="64.00" height="64.00" viewBox="0 0 64 64"><defs><linearGradient id="clg" x1="0" y1="0" x2="0" y2="1"><stop offset="0" stop-color="#d17f60"/><stop offset="1" stop-color="#c96b4a"/></linearGradient></defs><rect width="64" height="64" fill="url(#clg)"/><path d="M32.1 32.6 L21.4 10.9" stroke="#fbf8f2" stroke-width="4.2" stroke-linecap="round"/><path d="M32.1 32.6 L35 10.9" stroke="#fbf8f2" stroke-width="3.4" stroke-linecap="round"/><path d="M32.1 32.6 L45.9 15.8" stroke="#fbf8f2" stroke-width="4" stroke-linecap="round"/><path d="M32.1 32.6 L51.9 28.7" stroke="#fbf8f2" stroke-width="3.8" stroke-linecap="round"/><path d="M32.1 32.6 L51.9 37.1" stroke="#fbf8f2" stroke-width="4" stroke-linecap="round"/><path d="M32.1 32.6 L47.9 47" stroke="#fbf8f2" stroke-width="3.2" stroke-linecap="round"/><path d="M32.1 32.6 L42.2 50" stroke="#fbf8f2" stroke-width="3.6" stroke-linecap="round"/><path d="M32.1 32.6 L30.1 53.4" stroke="#fbf8f2" stroke-width="3.6" stroke-linecap="round"/><path d="M32.1 32.6 L19.4 50.5" stroke="#fbf8f2" stroke-width="3.2" stroke-linecap="round"/><path d="M32.1 32.6 L14.2 43.5" stroke="#fbf8f2" stroke-width="3.8" stroke-linecap="round"/><path d="M32.1 32.6 L9.3 31.6" stroke="#fbf8f2" stroke-width="3.6" stroke-linecap="round"/><path d="M32.1 32.6 L13.5 19.3" stroke="#fbf8f2" stroke-width="4" stroke-linecap="round"/><circle cx="32.1" cy="32.6" r="6" fill="#fbf8f2"/></svg>
<div class="t" style="left:2902.88px;top:216.41px;font-size:20.78px;line-height:20.78px;color:#f2f2f2;font-weight:normal;transform:scaleX(1.0644);transform-origin:0 0;-webkit-text-stroke:0.45px #f2f2f2;">Claude</div>
<div class="r" style="left:0.00px;top:275.00px;width:3024.00px;height:3.00px;background:#0c0c0c;"></div>
<div class="r" style="left:2.00px;top:278.00px;width:3020.00px;height:52.00px;background:#262626;"></div>
<div class="r" style="left:1px;top:279px;width:169px;height:50px;background:#242424;box-shadow:inset 0 0 0 1.5px #4a4a4a;"></div>
<div class="t" style="left:18.98px;top:288.99px;font-size:27.18px;line-height:27.18px;color:#e8e8e8;font-weight:normal;transform:scaleX(0.9063);transform-origin:0 0;">R19</div>
<svg class="r" style="left:152.00px;top:285.00px;" width="16.00" height="39.00" viewBox="0 0 16 39"><path d="M8 1 L15 13 H1Z M1 25 H15 L8 37Z" fill="#c4c4c4"/></svg>
<svg class="r" style="left:199.00px;top:296.00px;" width="24.00" height="23.00" viewBox="0 0 24 23"><path d="M3 3 L21 20 M21 3 L3 20" stroke="#5a5a5a" stroke-width="4"/></svg>
<svg class="r" style="left:254.00px;top:295.00px;" width="32.00" height="24.00" viewBox="0 0 32 24"><path d="M3 12 L12 21 L29 4" fill="none" stroke="#5a5a5a" stroke-width="4"/></svg>
<svg class="r" style="left:298.00px;top:286.00px;" width="38.00" height="40.00" viewBox="0 0 38 40"><g fill="none" stroke="#8e8e8e" stroke-width="2.4" stroke-linecap="round"><path d="M23.5 8.5 Q22.5 4.6 19 5.2 Q14.8 6 13.3 13 L10 28.5 Q8.8 34 5.2 33.8 Q3.6 33.5 4.6 31.6"/><path d="M10.8 14.8 H20.6"/><path d="M20.3 19.2 Q22.6 17.6 24.2 20.8 L28 28.2 Q29.6 31 31.8 29.6"/><path d="M33.2 19.2 Q31.6 17.4 29.4 19.6 L22.2 28.4 Q20.6 30.4 19.4 29.2"/></g><g fill="#8e8e8e"><circle cx="23" cy="7.6" r="1.8"/><circle cx="4.8" cy="31.8" r="1.8"/></g></svg>
<svg class="r" style="left:340.30px;top:301.10px;" width="16.80" height="11.90" viewBox="0 0 16.8 11.9"><path d="M3 3 L8.4 8.9 L13.8 3" fill="none" stroke="#e8e8e8" stroke-width="3" stroke-linecap="round" stroke-linejoin="round"/></svg>
<div class="r" style="left:360.5px;top:285px;width:2661px;height:40px;border-radius:8px;background:#383838;box-shadow:inset 0 0 0 1px #3c3c3c;"></div>
<div class="r" style="left:2977px;top:287px;width:45px;height:36px;border-radius:6px;background:#282828;"></div>
<svg class="r" style="left:2992.00px;top:299.00px;" width="16.00" height="14.00" viewBox="0 0 16 14"><path d="M1 1 H15 L8 13Z" fill="#bdbdbd"/></svg>
<div class="r" style="left:0.00px;top:330.00px;width:3024.00px;height:6.00px;background:linear-gradient(#c8c8c8,#e6e6e6);"></div>
<div class="r" style="left:40.00px;top:372.00px;width:2982.00px;height:1318.00px;background:#ffffff;"></div>
<div class="r" style="left:0.00px;top:336.00px;width:3022.00px;height:34.00px;background:#171717;"></div>
<div class="r" style="left:0.00px;top:370.00px;width:3022.00px;height:2.00px;background:#bcbcbc;"></div>
<svg class="r" style="left:0.00px;top:336.00px;" width="38.00" height="34.00" viewBox="0 0 38 34"><path d="M34 8 V30 H12 Z" fill="#5a5a5a"/></svg>
<div class="r" style="left:38.00px;top:336.00px;width:2.00px;height:1354.00px;background:#bcbcbc;"></div>
<div class="r" style="left:56.00px;top:337.00px;width:2.00px;height:33.00px;background:#5c5c5c;"></div>
<div class="t" style="left:42.05px;top:346.03px;font-size:16.50px;line-height:16.50px;color:#ffffff;font-weight:bold;">A</div>
<div class="r" style="left:272.00px;top:337.00px;width:2.00px;height:33.00px;background:#5c5c5c;"></div>
<div class="t" style="left:158.86px;top:346.03px;font-size:16.50px;line-height:16.50px;color:#ffffff;font-weight:bold;">B</div>
<div class="r" style="left:416.00px;top:337.00px;width:2.00px;height:33.00px;background:#5c5c5c;"></div>
<div class="t" style="left:338.93px;top:346.03px;font-size:16.50px;line-height:16.50px;color:#ffffff;font-weight:bold;">C</div>
<div class="r" style="left:560.00px;top:337.00px;width:2.00px;height:33.00px;background:#5c5c5c;"></div>
<div class="t" style="left:482.84px;top:346.03px;font-size:16.50px;line-height:16.50px;color:#ffffff;font-weight:bold;">D</div>
<div class="r" style="left:704.00px;top:337.00px;width:2.00px;height:33.00px;background:#5c5c5c;"></div>
<div class="t" style="left:627.27px;top:346.03px;font-size:16.50px;line-height:16.50px;color:#ffffff;font-weight:bold;">E</div>
<div class="r" style="left:848.00px;top:337.00px;width:2.00px;height:33.00px;background:#5c5c5c;"></div>
<div class="t" style="left:771.71px;top:346.03px;font-size:16.50px;line-height:16.50px;color:#ffffff;font-weight:bold;">F</div>
<div class="r" style="left:992.00px;top:337.00px;width:2.00px;height:33.00px;background:#5c5c5c;"></div>
<div class="t" style="left:914.76px;top:346.03px;font-size:16.50px;line-height:16.50px;color:#ffffff;font-weight:bold;">G</div>
<div class="r" style="left:1184.00px;top:337.00px;width:2.00px;height:33.00px;background:#5c5c5c;"></div>
<div class="t" style="left:1083.05px;top:346.03px;font-size:16.50px;line-height:16.50px;color:#ffffff;font-weight:bold;">H</div>
<div class="r" style="left:1280.00px;top:337.00px;width:2.00px;height:33.00px;background:#5c5c5c;"></div>
<div class="t" style="left:1230.71px;top:346.03px;font-size:16.50px;line-height:16.50px;color:#ffffff;font-weight:bold;">I</div>
<div class="r" style="left:1356.00px;top:337.00px;width:2.00px;height:33.00px;background:#5c5c5c;"></div>
<div class="t" style="left:1314.85px;top:346.03px;font-size:16.50px;line-height:16.50px;color:#ffffff;font-weight:bold;">J</div>
<div class="r" style="left:1432.00px;top:337.00px;width:2.00px;height:33.00px;background:#5c5c5c;"></div>
<div class="t" style="left:1388.57px;top:346.03px;font-size:16.50px;line-height:16.50px;color:#ffffff;font-weight:bold;">K</div>
<div class="r" style="left:1508.00px;top:337.00px;width:2.00px;height:33.00px;background:#5c5c5c;"></div>
<div class="t" style="left:1465.66px;top:346.03px;font-size:16.50px;line-height:16.50px;color:#ffffff;font-weight:bold;">L</div>
<div class="r" style="left:1584.00px;top:337.00px;width:2.00px;height:33.00px;background:#5c5c5c;"></div>
<div class="t" style="left:1540.13px;top:346.03px;font-size:16.50px;line-height:16.50px;color:#ffffff;font-weight:bold;">M</div>
<div class="r" style="left:1660.00px;top:337.00px;width:2.00px;height:33.00px;background:#5c5c5c;"></div>
<div class="t" style="left:1617.05px;top:346.03px;font-size:16.50px;line-height:16.50px;color:#ffffff;font-weight:bold;">N</div>
<div class="r" style="left:1736.00px;top:337.00px;width:2.00px;height:33.00px;background:#5c5c5c;"></div>
<div class="t" style="left:1692.59px;top:346.03px;font-size:16.50px;line-height:16.50px;color:#ffffff;font-weight:bold;">O</div>
<div class="r" style="left:1812.00px;top:337.00px;width:2.00px;height:33.00px;background:#5c5c5c;"></div>
<div class="t" style="left:1769.23px;top:346.03px;font-size:16.50px;line-height:16.50px;color:#ffffff;font-weight:bold;">P</div>
<div class="r" style="left:1888.00px;top:337.00px;width:2.00px;height:33.00px;background:#5c5c5c;"></div>
<div class="t" style="left:1844.59px;top:346.03px;font-size:16.50px;line-height:16.50px;color:#ffffff;font-weight:bold;">Q</div>
<div class="r" style="left:1889.00px;top:336.00px;width:76.00px;height:34.00px;background:#595959;"></div>
<div class="r" style="left:1889.00px;top:367.00px;width:76.00px;height:4.00px;background:#3a7a4a;"></div>
<div class="r" style="left:1964.00px;top:337.00px;width:2.00px;height:33.00px;background:#5c5c5c;"></div>
<div class="t" style="left:1920.66px;top:346.03px;font-size:16.50px;line-height:16.50px;color:#ffffff;font-weight:bold;">R</div>
<div class="r" style="left:2040.00px;top:337.00px;width:2.00px;height:33.00px;background:#5c5c5c;"></div>
<div class="t" style="left:1997.58px;top:346.03px;font-size:16.50px;line-height:16.50px;color:#ffffff;font-weight:bold;">S</div>
<div class="r" style="left:2116.00px;top:337.00px;width:2.00px;height:33.00px;background:#5c5c5c;"></div>
<div class="t" style="left:2073.96px;top:346.03px;font-size:16.50px;line-height:16.50px;color:#ffffff;font-weight:bold;">T</div>
<div class="r" style="left:2192.00px;top:337.00px;width:2.00px;height:33.00px;background:#5c5c5c;"></div>
<div class="t" style="left:2149.05px;top:346.03px;font-size:16.50px;line-height:16.50px;color:#ffffff;font-weight:bold;">U</div>
<div class="r" style="left:2268.00px;top:337.00px;width:2.00px;height:33.00px;background:#5c5c5c;"></div>
<div class="t" style="left:2225.50px;top:346.03px;font-size:16.50px;line-height:16.50px;color:#ffffff;font-weight:bold;">V</div>
<div class="r" style="left:2344.00px;top:337.00px;width:2.00px;height:33.00px;background:#5c5c5c;"></div>
<div class="t" style="left:2299.21px;top:346.03px;font-size:16.50px;line-height:16.50px;color:#ffffff;font-weight:bold;">W</div>
<div class="r" style="left:2420.00px;top:337.00px;width:2.00px;height:33.00px;background:#5c5c5c;"></div>
<div class="t" style="left:2377.50px;top:346.03px;font-size:16.50px;line-height:16.50px;color:#ffffff;font-weight:bold;">X</div>
<div class="r" style="left:2496.00px;top:337.00px;width:2.00px;height:33.00px;background:#5c5c5c;"></div>
<div class="t" style="left:2453.49px;top:346.03px;font-size:16.50px;line-height:16.50px;color:#ffffff;font-weight:bold;">Y</div>
<div class="r" style="left:2572.00px;top:337.00px;width:2.00px;height:33.00px;background:#5c5c5c;"></div>
<div class="t" style="left:2529.95px;top:346.03px;font-size:16.50px;line-height:16.50px;color:#ffffff;font-weight:bold;">Z</div>
<div class="r" style="left:2648.00px;top:337.00px;width:2.00px;height:33.00px;background:#5c5c5c;"></div>
<div class="t" style="left:2599.10px;top:346.03px;font-size:16.50px;line-height:16.50px;color:#ffffff;font-weight:bold;">AA</div>
<div class="r" style="left:2724.00px;top:337.00px;width:2.00px;height:33.00px;background:#5c5c5c;"></div>
<div class="t" style="left:2675.25px;top:346.03px;font-size:16.50px;line-height:16.50px;color:#ffffff;font-weight:bold;">AB</div>
<div class="r" style="left:2800.00px;top:337.00px;width:2.00px;height:33.00px;background:#5c5c5c;"></div>
<div class="t" style="left:2751.10px;top:346.03px;font-size:16.50px;line-height:16.50px;color:#ffffff;font-weight:bold;">AC</div>
<div class="r" style="left:2876.00px;top:337.00px;width:2.00px;height:33.00px;background:#5c5c5c;"></div>
<div class="t" style="left:2827.23px;top:346.03px;font-size:16.50px;line-height:16.50px;color:#ffffff;font-weight:bold;">AD</div>
<div class="r" style="left:2952.00px;top:337.00px;width:2.00px;height:33.00px;background:#5c5c5c;"></div>
<div class="t" style="left:2903.66px;top:346.03px;font-size:16.50px;line-height:16.50px;color:#ffffff;font-weight:bold;">AE</div>
<div class="r" style="left:3028.00px;top:337.00px;width:2.00px;height:33.00px;background:#5c5c5c;"></div>
<div class="t" style="left:2980.10px;top:346.03px;font-size:16.50px;line-height:16.50px;color:#ffffff;font-weight:bold;">AF</div>
<div class="r" style="left:0.00px;top:372.00px;width:38.00px;height:1318.00px;background:#171717;"></div>
<div class="r" style="left:0.00px;top:394.00px;width:38.00px;height:2.00px;background:#5c5c5c;"></div>
<div class="t" style="left:13.97px;top:375.61px;font-size:17.00px;line-height:17.00px;color:#ffffff;font-weight:bold;">1</div>
<div class="r" style="left:0.00px;top:436.00px;width:38.00px;height:2.00px;background:#5c5c5c;"></div>
<div class="t" style="left:14.32px;top:417.61px;font-size:17.00px;line-height:17.00px;color:#ffffff;font-weight:bold;">2</div>
<div class="r" style="left:0.00px;top:464.00px;width:38.00px;height:2.00px;background:#5c5c5c;"></div>
<div class="t" style="left:14.38px;top:445.61px;font-size:17.00px;line-height:17.00px;color:#ffffff;font-weight:bold;">3</div>
<div class="r" style="left:0.00px;top:488.00px;width:38.00px;height:2.00px;background:#5c5c5c;"></div>
<div class="t" style="left:14.19px;top:469.61px;font-size:17.00px;line-height:17.00px;color:#ffffff;font-weight:bold;">4</div>
<div class="r" style="left:0.00px;top:510.00px;width:38.00px;height:2.00px;background:#5c5c5c;"></div>
<div class="t" style="left:14.25px;top:491.61px;font-size:17.00px;line-height:17.00px;color:#ffffff;font-weight:bold;">5</div>
<div class="r" style="left:0.00px;top:562.00px;width:38.00px;height:2.00px;background:#5c5c5c;"></div>
<div class="t" style="left:14.27px;top:543.61px;font-size:17.00px;line-height:17.00px;color:#ffffff;font-weight:bold;">6</div>
<div class="r" style="left:0.00px;top:586.00px;width:38.00px;height:2.00px;background:#5c5c5c;"></div>
<div class="t" style="left:14.28px;top:567.61px;font-size:17.00px;line-height:17.00px;color:#ffffff;font-weight:bold;">7</div>
<div class="r" style="left:0.00px;top:614.00px;width:38.00px;height:2.00px;background:#5c5c5c;"></div>
<div class="t" style="left:14.26px;top:595.61px;font-size:17.00px;line-height:17.00px;color:#ffffff;font-weight:bold;">8</div>
<div class="r" style="left:0.00px;top:638.00px;width:38.00px;height:2.00px;background:#5c5c5c;"></div>
<div class="t" style="left:14.29px;top:619.61px;font-size:17.00px;line-height:17.00px;color:#ffffff;font-weight:bold;">9</div>
<div class="r" style="left:0.00px;top:662.00px;width:38.00px;height:2.00px;background:#5c5c5c;"></div>
<div class="t" style="left:9.36px;top:643.61px;font-size:17.00px;line-height:17.00px;color:#ffffff;font-weight:bold;">10</div>
<div class="r" style="left:0.00px;top:686.00px;width:38.00px;height:2.00px;background:#5c5c5c;"></div>
<div class="t" style="left:9.72px;top:667.61px;font-size:17.00px;line-height:17.00px;color:#ffffff;font-weight:bold;">11</div>
<div class="r" style="left:0.00px;top:710.00px;width:38.00px;height:2.00px;background:#5c5c5c;"></div>
<div class="t" style="left:9.35px;top:691.61px;font-size:17.00px;line-height:17.00px;color:#ffffff;font-weight:bold;">12</div>
<div class="r" style="left:0.00px;top:734.00px;width:38.00px;height:2.00px;background:#5c5c5c;"></div>
<div class="t" style="left:9.32px;top:715.61px;font-size:17.00px;line-height:17.00px;color:#ffffff;font-weight:bold;">13</div>
<div class="r" style="left:0.00px;top:758.00px;width:38.00px;height:2.00px;background:#5c5c5c;"></div>
<div class="t" style="left:9.06px;top:739.61px;font-size:17.00px;line-height:17.00px;color:#ffffff;font-weight:bold;">14</div>
<div class="r" style="left:0.00px;top:782.00px;width:38.00px;height:2.00px;background:#5c5c5c;"></div>
<div class="t" style="left:9.25px;top:763.61px;font-size:17.00px;line-height:17.00px;color:#ffffff;font-weight:bold;">15</div>
<div class="r" style="left:0.00px;top:806.00px;width:38.00px;height:2.00px;background:#5c5c5c;"></div>
<div class="t" style="left:9.32px;top:787.61px;font-size:17.00px;line-height:17.00px;color:#ffffff;font-weight:bold;">16</div>
<div class="r" style="left:0.00px;top:830.00px;width:38.00px;height:2.00px;background:#5c5c5c;"></div>
<div class="t" style="left:9.38px;top:811.61px;font-size:17.00px;line-height:17.00px;color:#ffffff;font-weight:bold;">17</div>
<div class="r" style="left:0.00px;top:854.00px;width:38.00px;height:2.00px;background:#5c5c5c;"></div>
<div class="t" style="left:9.27px;top:835.61px;font-size:17.00px;line-height:17.00px;color:#ffffff;font-weight:bold;">18</div>
<div class="r" style="left:0.00px;top:855.00px;width:38.00px;height:28.00px;background:#5a5a5a;"></div>
<div class="r" style="left:36.00px;top:855.00px;width:4.00px;height:28.00px;background:#3a7a4a;"></div>
<div class="r" style="left:0.00px;top:883.00px;width:38.00px;height:2.00px;background:#5c5c5c;"></div>
<div class="t" style="left:9.33px;top:864.61px;font-size:17.00px;line-height:17.00px;color:#ffffff;font-weight:bold;">19</div>
<div class="r" style="left:0.00px;top:906.00px;width:38.00px;height:2.00px;background:#5c5c5c;"></div>
<div class="t" style="left:9.60px;top:887.61px;font-size:17.00px;line-height:17.00px;color:#ffffff;font-weight:bold;">20</div>
<div class="r" style="left:0.00px;top:930.00px;width:38.00px;height:2.00px;background:#5c5c5c;"></div>
<div class="t" style="left:9.49px;top:911.61px;font-size:17.00px;line-height:17.00px;color:#ffffff;font-weight:bold;">21</div>
<div class="r" style="left:0.00px;top:954.00px;width:38.00px;height:2.00px;background:#5c5c5c;"></div>
<div class="t" style="left:9.59px;top:935.61px;font-size:17.00px;line-height:17.00px;color:#ffffff;font-weight:bold;">22</div>
<div class="r" style="left:0.00px;top:978.00px;width:38.00px;height:2.00px;background:#5c5c5c;"></div>
<div class="t" style="left:9.56px;top:959.61px;font-size:17.00px;line-height:17.00px;color:#ffffff;font-weight:bold;">23</div>
<div class="r" style="left:0.00px;top:1002.00px;width:38.00px;height:2.00px;background:#5c5c5c;"></div>
<div class="t" style="left:9.30px;top:983.61px;font-size:17.00px;line-height:17.00px;color:#ffffff;font-weight:bold;">24</div>
<div class="r" style="left:0.00px;top:1030.00px;width:38.00px;height:2.00px;background:#5c5c5c;"></div>
<div class="t" style="left:9.49px;top:1011.61px;font-size:17.00px;line-height:17.00px;color:#ffffff;font-weight:bold;">25</div>
<div class="r" style="left:0.00px;top:1060.00px;width:38.00px;height:2.00px;background:#5c5c5c;"></div>
<div class="t" style="left:9.56px;top:1041.61px;font-size:17.00px;line-height:17.00px;color:#ffffff;font-weight:bold;">26</div>
<div class="r" style="left:0.00px;top:1090.00px;width:38.00px;height:2.00px;background:#5c5c5c;"></div>
<div class="t" style="left:9.62px;top:1071.61px;font-size:17.00px;line-height:17.00px;color:#ffffff;font-weight:bold;">27</div>
<div class="r" style="left:0.00px;top:1114.00px;width:38.00px;height:2.00px;background:#5c5c5c;"></div>
<div class="t" style="left:9.51px;top:1095.61px;font-size:17.00px;line-height:17.00px;color:#ffffff;font-weight:bold;">28</div>
<div class="r" style="left:0.00px;top:1138.00px;width:38.00px;height:2.00px;background:#5c5c5c;"></div>
<div class="t" style="left:9.57px;top:1119.61px;font-size:17.00px;line-height:17.00px;color:#ffffff;font-weight:bold;">29</div>
<div class="r" style="left:0.00px;top:1162.00px;width:38.00px;height:2.00px;background:#5c5c5c;"></div>
<div class="t" style="left:9.70px;top:1143.61px;font-size:17.00px;line-height:17.00px;color:#ffffff;font-weight:bold;">30</div>
<div class="r" style="left:0.00px;top:1186.00px;width:38.00px;height:2.00px;background:#5c5c5c;"></div>
<div class="t" style="left:9.59px;top:1167.61px;font-size:17.00px;line-height:17.00px;color:#ffffff;font-weight:bold;">31</div>
<div class="r" style="left:0.00px;top:1210.00px;width:38.00px;height:2.00px;background:#5c5c5c;"></div>
<div class="t" style="left:9.69px;top:1191.61px;font-size:17.00px;line-height:17.00px;color:#ffffff;font-weight:bold;">32</div>
<div class="r" style="left:0.00px;top:1234.00px;width:38.00px;height:2.00px;background:#5c5c5c;"></div>
<div class="t" style="left:9.66px;top:1215.61px;font-size:17.00px;line-height:17.00px;color:#ffffff;font-weight:bold;">33</div>
<div class="r" style="left:0.00px;top:1258.00px;width:38.00px;height:2.00px;background:#5c5c5c;"></div>
<div class="t" style="left:9.40px;top:1239.61px;font-size:17.00px;line-height:17.00px;color:#ffffff;font-weight:bold;">34</div>
<div class="r" style="left:0.00px;top:1282.00px;width:38.00px;height:2.00px;background:#5c5c5c;"></div>
<div class="t" style="left:9.59px;top:1263.61px;font-size:17.00px;line-height:17.00px;color:#ffffff;font-weight:bold;">35</div>
<div class="r" style="left:0.00px;top:1306.00px;width:38.00px;height:2.00px;background:#5c5c5c;"></div>
<div class="t" style="left:9.66px;top:1287.61px;font-size:17.00px;line-height:17.00px;color:#ffffff;font-weight:bold;">36</div>
<div class="r" style="left:0.00px;top:1330.00px;width:38.00px;height:2.00px;background:#5c5c5c;"></div>
<div class="t" style="left:9.72px;top:1311.61px;font-size:17.00px;line-height:17.00px;color:#ffffff;font-weight:bold;">37</div>
<div class="r" style="left:0.00px;top:1354.00px;width:38.00px;height:2.00px;background:#5c5c5c;"></div>
<div class="t" style="left:9.61px;top:1335.61px;font-size:17.00px;line-height:17.00px;color:#ffffff;font-weight:bold;">38</div>
<div class="r" style="left:0.00px;top:1378.00px;width:38.00px;height:2.00px;background:#5c5c5c;"></div>
<div class="t" style="left:9.67px;top:1359.61px;font-size:17.00px;line-height:17.00px;color:#ffffff;font-weight:bold;">39</div>
<div class="r" style="left:0.00px;top:1402.00px;width:38.00px;height:2.00px;background:#5c5c5c;"></div>
<div class="t" style="left:9.77px;top:1383.61px;font-size:17.00px;line-height:17.00px;color:#ffffff;font-weight:bold;">40</div>
<div class="r" style="left:0.00px;top:1426.00px;width:38.00px;height:2.00px;background:#5c5c5c;"></div>
<div class="t" style="left:9.65px;top:1407.61px;font-size:17.00px;line-height:17.00px;color:#ffffff;font-weight:bold;">41</div>
<div class="r" style="left:0.00px;top:1450.00px;width:38.00px;height:2.00px;background:#5c5c5c;"></div>
<div class="t" style="left:9.76px;top:1431.61px;font-size:17.00px;line-height:17.00px;color:#ffffff;font-weight:bold;">42</div>
<div class="r" style="left:0.00px;top:1474.00px;width:38.00px;height:2.00px;background:#5c5c5c;"></div>
<div class="t" style="left:9.72px;top:1455.61px;font-size:17.00px;line-height:17.00px;color:#ffffff;font-weight:bold;">43</div>
<div class="r" style="left:0.00px;top:1498.00px;width:38.00px;height:2.00px;background:#5c5c5c;"></div>
<div class="t" style="left:9.46px;top:1479.61px;font-size:17.00px;line-height:17.00px;color:#ffffff;font-weight:bold;">44</div>
<div class="r" style="left:0.00px;top:1522.00px;width:38.00px;height:2.00px;background:#5c5c5c;"></div>
<div class="t" style="left:9.65px;top:1503.61px;font-size:17.00px;line-height:17.00px;color:#ffffff;font-weight:bold;">45</div>
<div class="r" style="left:0.00px;top:1546.00px;width:38.00px;height:2.00px;background:#5c5c5c;"></div>
<div class="t" style="left:9.72px;top:1527.61px;font-size:17.00px;line-height:17.00px;color:#ffffff;font-weight:bold;">46</div>
<div class="r" style="left:0.00px;top:1570.00px;width:38.00px;height:2.00px;background:#5c5c5c;"></div>
<div class="t" style="left:9.79px;top:1551.61px;font-size:17.00px;line-height:17.00px;color:#ffffff;font-weight:bold;">47</div>
<div class="r" style="left:0.00px;top:1594.00px;width:38.00px;height:2.00px;background:#5c5c5c;"></div>
<div class="t" style="left:9.68px;top:1575.61px;font-size:17.00px;line-height:17.00px;color:#ffffff;font-weight:bold;">48</div>
<div class="r" style="left:0.00px;top:1618.00px;width:38.00px;height:2.00px;background:#5c5c5c;"></div>
<div class="t" style="left:9.73px;top:1599.61px;font-size:17.00px;line-height:17.00px;color:#ffffff;font-weight:bold;">49</div>
<div class="r" style="left:0.00px;top:1642.00px;width:38.00px;height:2.00px;background:#5c5c5c;"></div>
<div class="t" style="left:9.63px;top:1623.61px;font-size:17.00px;line-height:17.00px;color:#ffffff;font-weight:bold;">50</div>
<div class="r" style="left:0.00px;top:1666.00px;width:38.00px;height:2.00px;background:#5c5c5c;"></div>
<div class="t" style="left:9.52px;top:1647.61px;font-size:17.00px;line-height:17.00px;color:#ffffff;font-weight:bold;">51</div>
<div class="r" style="left:0.00px;top:1690.00px;width:38.00px;height:2.00px;background:#5c5c5c;"></div>
<div class="t" style="left:9.62px;top:1671.61px;font-size:17.00px;line-height:17.00px;color:#ffffff;font-weight:bold;">52</div>
<div class="r" style="left:56.00px;top:394.00px;width:1226.00px;height:42.00px;background:#243858;"></div>
<div class="r" style="left:56.00px;top:436.00px;width:1226.00px;height:30.00px;background:#385f87;"></div>
<div class="t" style="left:61.18px;top:400.49px;font-size:25.29px;line-height:25.29px;color:#ffffff;font-weight:bold;transform:scaleX(0.8405);transform-origin:0 0;">NOVATECH AI — EXECUTIVE DASHBOARD</div>
<div class="t" style="left:61.29px;top:441.61px;font-size:18.90px;line-height:18.90px;color:#ffffff;font-weight:normal;transform:scaleX(0.9398);transform-origin:0 0;-webkit-text-stroke:0.3px #ffffff;">5-Year Financial Projection (2026–2030)</div>
<div class="r" style="left:56.00px;top:508.00px;width:218.00px;height:6.00px;background:#243858;"></div>
<div class="r" style="left:56.00px;top:514.00px;width:218.00px;height:48.00px;background:#eff3f8;"></div>
<div class="r" style="left:56.00px;top:562.00px;width:218.00px;height:2.00px;background:#d9d9d9;"></div>
<div class="t" style="left:128.17px;top:493.08px;font-size:15.26px;line-height:15.26px;color:#8c8c8c;font-weight:bold;transform:scaleX(0.8805);transform-origin:0 0;">Y5 Revenue</div>
<div class="t" style="left:76.26px;top:516.62px;font-size:27.62px;line-height:27.62px;color:#1f3a5f;font-weight:bold;transform:scaleX(0.9309);transform-origin:0 0;">$10,777,090.89</div>
<div class="r" style="left:416.00px;top:508.00px;width:146.00px;height:6.00px;background:#243858;"></div>
<div class="r" style="left:416.00px;top:514.00px;width:146.00px;height:48.00px;background:#eff3f8;"></div>
<div class="r" style="left:416.00px;top:562.00px;width:146.00px;height:2.00px;background:#d9d9d9;"></div>
<div class="t" style="left:435.77px;top:493.08px;font-size:15.26px;line-height:15.26px;color:#8c8c8c;font-weight:bold;transform:scaleX(0.8828);transform-origin:0 0;">Y5 Gross Margin</div>
<div class="t" style="left:452.91px;top:516.62px;font-size:27.62px;line-height:27.62px;color:#1f3a5f;font-weight:bold;transform:scaleX(0.9164);transform-origin:0 0;">75.0%</div>
<div class="r" style="left:704.00px;top:508.00px;width:146.00px;height:6.00px;background:#243858;"></div>
<div class="r" style="left:704.00px;top:514.00px;width:146.00px;height:48.00px;background:#eff3f8;"></div>
<div class="r" style="left:704.00px;top:562.00px;width:146.00px;height:2.00px;background:#d9d9d9;"></div>
<div class="t" style="left:721.58px;top:493.08px;font-size:15.26px;line-height:15.26px;color:#8c8c8c;font-weight:bold;transform:scaleX(0.8487);transform-origin:0 0;">Y5 EBITDA Margin</div>
<div class="t" style="left:741.09px;top:516.62px;font-size:27.62px;line-height:27.62px;color:#1f3a5f;font-weight:bold;transform:scaleX(0.9230);transform-origin:0 0;">15.0%</div>
<div class="r" style="left:992.00px;top:508.00px;width:194.00px;height:6.00px;background:#243858;"></div>
<div class="r" style="left:992.00px;top:514.00px;width:194.00px;height:48.00px;background:#eff3f8;"></div>
<div class="r" style="left:992.00px;top:562.00px;width:194.00px;height:2.00px;background:#d9d9d9;"></div>
<div class="t" style="left:1043.57px;top:493.08px;font-size:15.26px;line-height:15.26px;color:#8c8c8c;font-weight:bold;transform:scaleX(0.8833);transform-origin:0 0;">Y5 Net Income</div>
<div class="t" style="left:1007.66px;top:516.62px;font-size:27.62px;line-height:27.62px;color:#1f3a5f;font-weight:bold;transform:scaleX(0.9336);transform-origin:0 0;">$1,067,307.23</div>
<div class="t" style="left:61.68px;top:591.81px;font-size:18.90px;line-height:18.90px;color:#243858;font-weight:bold;transform:scaleX(0.8868);transform-origin:0 0;">FINANCIAL SUMMARY</div>
<div class="r" style="left:56.00px;top:612.00px;width:1226.00px;height:4.00px;background:#243858;"></div>
<div class="r" style="left:56.00px;top:612.00px;width:937.50px;height:26.00px;background:#243858;"></div>
<div class="t" style="left:60.87px;top:619.35px;font-size:16.72px;line-height:16.72px;color:#ffffff;font-weight:bold;transform:scaleX(1.0079);transform-origin:0 0;">Metric</div>
<div class="t" style="left:324.89px;top:620.85px;font-size:16.60px;line-height:16.60px;color:#ffffff;font-weight:bold;transform:scaleX(1.0900);transform-origin:0 0;">2026</div>
<div class="t" style="left:468.96px;top:620.85px;font-size:16.60px;line-height:16.60px;color:#ffffff;font-weight:bold;transform:scaleX(1.0900);transform-origin:0 0;">2027</div>
<div class="t" style="left:612.84px;top:620.85px;font-size:16.60px;line-height:16.60px;color:#ffffff;font-weight:bold;transform:scaleX(1.0900);transform-origin:0 0;">2028</div>
<div class="t" style="left:756.90px;top:620.85px;font-size:16.60px;line-height:16.60px;color:#ffffff;font-weight:bold;transform:scaleX(1.0900);transform-origin:0 0;">2029</div>
<div class="t" style="left:900.93px;top:620.85px;font-size:16.60px;line-height:16.60px;color:#ffffff;font-weight:bold;transform:scaleX(1.0900);transform-origin:0 0;">2030</div>
<div class="r" style="left:56.00px;top:638.00px;width:937.50px;height:25.50px;background:#f4f6fa;"></div>
<div class="t" style="left:76.32px;top:644.55px;font-size:16.60px;line-height:16.60px;color:#000000;font-weight:bold;transform:scaleX(0.9550);transform-origin:0 0;">Total Revenue</div>
<div class="t" style="left:285.78px;top:644.55px;font-size:16.60px;line-height:16.60px;color:#000000;font-weight:bold;">$</div>
<div class="t" style="left:328.40px;top:644.55px;font-size:16.60px;line-height:16.60px;color:#000000;font-weight:bold;transform:scaleX(1.0600);transform-origin:0 0;">771,116.2</div>
<div class="t" style="left:429.78px;top:644.55px;font-size:16.60px;line-height:16.60px;color:#000000;font-weight:bold;">$</div>
<div class="t" style="left:456.75px;top:644.55px;font-size:16.60px;line-height:16.60px;color:#000000;font-weight:bold;transform:scaleX(1.0600);transform-origin:0 0;">2,158,806.2</div>
<div class="t" style="left:573.78px;top:644.55px;font-size:16.60px;line-height:16.60px;color:#000000;font-weight:bold;">$</div>
<div class="t" style="left:600.68px;top:644.55px;font-size:16.60px;line-height:16.60px;color:#000000;font-weight:bold;transform:scaleX(1.0600);transform-origin:0 0;">4,320,129.3</div>
<div class="t" style="left:717.78px;top:644.55px;font-size:16.60px;line-height:16.60px;color:#000000;font-weight:bold;">$</div>
<div class="t" style="left:744.54px;top:644.55px;font-size:16.60px;line-height:16.60px;color:#000000;font-weight:bold;transform:scaleX(1.0600);transform-origin:0 0;">7,217,706.5</div>
<div class="t" style="left:861.78px;top:644.55px;font-size:16.60px;line-height:16.60px;color:#000000;font-weight:bold;">$</div>
<div class="t" style="left:878.91px;top:644.55px;font-size:16.60px;line-height:16.60px;color:#000000;font-weight:bold;transform:scaleX(1.0600);transform-origin:0 0;">10,777,090.9</div>
<div class="t" style="left:75.16px;top:668.55px;font-size:16.60px;line-height:16.60px;color:#000000;font-weight:normal;transform:scaleX(0.9830);transform-origin:0 0;">Revenue Growth</div>
<div class="t" style="left:336.70px;top:668.55px;font-size:16.60px;line-height:16.60px;color:#000000;font-weight:normal;transform:scaleX(1.0600);transform-origin:0 0;">—</div>
<div class="t" style="left:466.64px;top:668.55px;font-size:16.60px;line-height:16.60px;color:#000000;font-weight:normal;transform:scaleX(1.0600);transform-origin:0 0;">180%</div>
<div class="t" style="left:610.64px;top:668.55px;font-size:16.60px;line-height:16.60px;color:#000000;font-weight:normal;transform:scaleX(1.0600);transform-origin:0 0;">100%</div>
<div class="t" style="left:759.76px;top:668.55px;font-size:16.60px;line-height:16.60px;color:#000000;font-weight:normal;transform:scaleX(1.0600);transform-origin:0 0;">67%</div>
<div class="t" style="left:904.00px;top:668.55px;font-size:16.60px;line-height:16.60px;color:#000000;font-weight:normal;transform:scaleX(1.0600);transform-origin:0 0;">49%</div>
<div class="r" style="left:56.00px;top:686.00px;width:937.50px;height:25.50px;background:#f4f6fa;"></div>
<div class="t" style="left:75.68px;top:692.55px;font-size:16.60px;line-height:16.60px;color:#000000;font-weight:normal;transform:scaleX(0.9830);transform-origin:0 0;">Gross Profit</div>
<div class="t" style="left:285.82px;top:692.55px;font-size:16.60px;line-height:16.60px;color:#000000;font-weight:normal;">$</div>
<div class="t" style="left:327.61px;top:692.55px;font-size:16.60px;line-height:16.60px;color:#000000;font-weight:normal;transform:scaleX(1.0600);transform-origin:0 0;">578,337.2</div>
<div class="t" style="left:429.82px;top:692.55px;font-size:16.60px;line-height:16.60px;color:#000000;font-weight:normal;">$</div>
<div class="t" style="left:456.93px;top:692.55px;font-size:16.60px;line-height:16.60px;color:#000000;font-weight:normal;transform:scaleX(1.0600);transform-origin:0 0;">1,619,104.7</div>
<div class="t" style="left:573.82px;top:692.55px;font-size:16.60px;line-height:16.60px;color:#000000;font-weight:normal;">$</div>
<div class="t" style="left:600.73px;top:692.55px;font-size:16.60px;line-height:16.60px;color:#000000;font-weight:normal;transform:scaleX(1.0600);transform-origin:0 0;">3,240,097.0</div>
<div class="t" style="left:717.82px;top:692.55px;font-size:16.60px;line-height:16.60px;color:#000000;font-weight:normal;">$</div>
<div class="t" style="left:744.88px;top:692.55px;font-size:16.60px;line-height:16.60px;color:#000000;font-weight:normal;transform:scaleX(1.0600);transform-origin:0 0;">5,413,279.9</div>
<div class="t" style="left:861.82px;top:692.55px;font-size:16.60px;line-height:16.60px;color:#000000;font-weight:normal;">$</div>
<div class="t" style="left:888.93px;top:692.55px;font-size:16.60px;line-height:16.60px;color:#000000;font-weight:normal;transform:scaleX(1.0600);transform-origin:0 0;">8,082,818.2</div>
<div class="t" style="left:75.68px;top:716.55px;font-size:16.60px;line-height:16.60px;color:#000000;font-weight:normal;transform:scaleX(0.9830);transform-origin:0 0;">Gross Margin</div>
<div class="t" style="left:320.42px;top:716.55px;font-size:16.60px;line-height:16.60px;color:#000000;font-weight:normal;transform:scaleX(1.0600);transform-origin:0 0;">75.0%</div>
<div class="t" style="left:464.42px;top:716.55px;font-size:16.60px;line-height:16.60px;color:#000000;font-weight:normal;transform:scaleX(1.0600);transform-origin:0 0;">75.0%</div>
<div class="t" style="left:608.42px;top:716.55px;font-size:16.60px;line-height:16.60px;color:#000000;font-weight:normal;transform:scaleX(1.0600);transform-origin:0 0;">75.0%</div>
<div class="t" style="left:752.42px;top:716.55px;font-size:16.60px;line-height:16.60px;color:#000000;font-weight:normal;transform:scaleX(1.0600);transform-origin:0 0;">75.0%</div>
<div class="t" style="left:896.42px;top:716.55px;font-size:16.60px;line-height:16.60px;color:#000000;font-weight:normal;transform:scaleX(1.0600);transform-origin:0 0;">75.0%</div>
<div class="r" style="left:56.00px;top:734.00px;width:937.50px;height:25.50px;background:#f4f6fa;"></div>
<div class="t" style="left:75.44px;top:740.55px;font-size:16.60px;line-height:16.60px;color:#000000;font-weight:bold;transform:scaleX(0.9550);transform-origin:0 0;">EBITDA</div>
<div class="t" style="left:285.78px;top:740.55px;font-size:16.60px;line-height:16.60px;color:#000000;font-weight:bold;">$</div>
<div class="t" style="left:322.85px;top:740.55px;font-size:16.60px;line-height:16.60px;color:#000000;font-weight:bold;transform:scaleX(1.0600);transform-origin:0 0;">(115,667.4)</div>
<div class="t" style="left:429.78px;top:740.55px;font-size:16.60px;line-height:16.60px;color:#000000;font-weight:bold;">$</div>
<div class="t" style="left:465.88px;top:740.55px;font-size:16.60px;line-height:16.60px;color:#000000;font-weight:bold;transform:scaleX(1.0600);transform-origin:0 0;">(161,910.5)</div>
<div class="t" style="left:573.78px;top:740.55px;font-size:16.60px;line-height:16.60px;color:#000000;font-weight:bold;">$</div>
<div class="t" style="left:669.14px;top:740.55px;font-size:16.60px;line-height:16.60px;color:#000000;font-weight:bold;">-</div>
<div class="t" style="left:717.78px;top:740.55px;font-size:16.60px;line-height:16.60px;color:#000000;font-weight:bold;">$</div>
<div class="t" style="left:759.44px;top:740.55px;font-size:16.60px;line-height:16.60px;color:#000000;font-weight:bold;transform:scaleX(1.0600);transform-origin:0 0;">541,328.0</div>
<div class="t" style="left:861.78px;top:740.55px;font-size:16.60px;line-height:16.60px;color:#000000;font-weight:bold;">$</div>
<div class="t" style="left:888.68px;top:740.55px;font-size:16.60px;line-height:16.60px;color:#000000;font-weight:bold;transform:scaleX(1.0600);transform-origin:0 0;">1,616,563.6</div>
<div class="t" style="left:75.16px;top:764.55px;font-size:16.60px;line-height:16.60px;color:#000000;font-weight:normal;transform:scaleX(0.9830);transform-origin:0 0;">EBITDA Margin</div>
<div class="t" style="left:317.55px;top:764.55px;font-size:16.60px;line-height:16.60px;color:#000000;font-weight:normal;transform:scaleX(1.0600);transform-origin:0 0;">-15.0%</div>
<div class="t" style="left:466.44px;top:764.55px;font-size:16.60px;line-height:16.60px;color:#000000;font-weight:normal;transform:scaleX(1.0600);transform-origin:0 0;">-7.5%</div>
<div class="t" style="left:613.42px;top:764.55px;font-size:16.60px;line-height:16.60px;color:#000000;font-weight:normal;transform:scaleX(1.0600);transform-origin:0 0;">0.0%</div>
<div class="t" style="left:757.31px;top:764.55px;font-size:16.60px;line-height:16.60px;color:#000000;font-weight:normal;transform:scaleX(1.0600);transform-origin:0 0;">7.5%</div>
<div class="t" style="left:896.20px;top:764.55px;font-size:16.60px;line-height:16.60px;color:#000000;font-weight:normal;transform:scaleX(1.0600);transform-origin:0 0;">15.0%</div>
<div class="r" style="left:56.00px;top:782.00px;width:937.50px;height:25.50px;background:#f4f6fa;"></div>
<div class="t" style="left:75.44px;top:788.55px;font-size:16.60px;line-height:16.60px;color:#000000;font-weight:bold;transform:scaleX(0.9550);transform-origin:0 0;">Net Income</div>
<div class="t" style="left:285.78px;top:788.55px;font-size:16.60px;line-height:16.60px;color:#000000;font-weight:bold;">$</div>
<div class="t" style="left:321.88px;top:788.55px;font-size:16.60px;line-height:16.60px;color:#000000;font-weight:bold;transform:scaleX(1.0600);transform-origin:0 0;">(181,089.8)</div>
<div class="t" style="left:429.78px;top:788.55px;font-size:16.60px;line-height:16.60px;color:#000000;font-weight:bold;">$</div>
<div class="t" style="left:465.88px;top:788.55px;font-size:16.60px;line-height:16.60px;color:#000000;font-weight:bold;transform:scaleX(1.0600);transform-origin:0 0;">(255,086.6)</div>
<div class="t" style="left:573.78px;top:788.55px;font-size:16.60px;line-height:16.60px;color:#000000;font-weight:bold;">$</div>
<div class="t" style="left:609.88px;top:788.55px;font-size:16.60px;line-height:16.60px;color:#000000;font-weight:bold;transform:scaleX(1.0600);transform-origin:0 0;">(136,402.6)</div>
<div class="t" style="left:717.78px;top:788.55px;font-size:16.60px;line-height:16.60px;color:#000000;font-weight:bold;">$</div>
<div class="t" style="left:759.36px;top:788.55px;font-size:16.60px;line-height:16.60px;color:#000000;font-weight:bold;transform:scaleX(1.0600);transform-origin:0 0;">274,109.3</div>
<div class="t" style="left:861.78px;top:788.55px;font-size:16.60px;line-height:16.60px;color:#000000;font-weight:bold;">$</div>
<div class="t" style="left:888.75px;top:788.55px;font-size:16.60px;line-height:16.60px;color:#000000;font-weight:bold;transform:scaleX(1.0600);transform-origin:0 0;">1,067,307.2</div>
<div class="t" style="left:75.16px;top:812.55px;font-size:16.60px;line-height:16.60px;color:#000000;font-weight:normal;transform:scaleX(0.9830);transform-origin:0 0;">Net Margin</div>
<div class="t" style="left:317.55px;top:812.55px;font-size:16.60px;line-height:16.60px;color:#000000;font-weight:normal;transform:scaleX(1.0600);transform-origin:0 0;">-23.5%</div>
<div class="t" style="left:462.20px;top:812.55px;font-size:16.60px;line-height:16.60px;color:#000000;font-weight:normal;transform:scaleX(1.0600);transform-origin:0 0;">-11.8%</div>
<div class="t" style="left:610.44px;top:812.55px;font-size:16.60px;line-height:16.60px;color:#000000;font-weight:normal;transform:scaleX(1.0600);transform-origin:0 0;">-3.2%</div>
<div class="t" style="left:757.43px;top:812.55px;font-size:16.60px;line-height:16.60px;color:#000000;font-weight:normal;transform:scaleX(1.0600);transform-origin:0 0;">3.8%</div>
<div class="t" style="left:901.35px;top:812.55px;font-size:16.60px;line-height:16.60px;color:#000000;font-weight:normal;transform:scaleX(1.0600);transform-origin:0 0;">9.9%</div>
<div class="t" style="left:62.12px;top:859.85px;font-size:18.60px;line-height:18.60px;color:#243858;font-weight:bold;transform:scaleX(0.8857);transform-origin:0 0;">CASH &amp; FUNDING OVERVIEW</div>
<div class="r" style="left:56.00px;top:880.00px;width:1226.00px;height:4.00px;background:#243858;"></div>
<div class="t" style="left:75.76px;top:889.25px;font-size:16.60px;line-height:16.60px;color:#000000;font-weight:normal;transform:scaleX(0.9850);transform-origin:0 0;">Starting Cash</div>
<div class="t" style="left:284.32px;top:889.25px;font-size:16.60px;line-height:16.60px;color:#000000;font-weight:normal;">$</div>
<div class="t" style="left:311.73px;top:889.25px;font-size:16.60px;line-height:16.60px;color:#000000;font-weight:normal;transform:scaleX(1.0600);transform-origin:0 0;">3,000,000.0</div>
<div class="t" style="left:75.76px;top:912.25px;font-size:16.60px;line-height:16.60px;color:#000000;font-weight:normal;transform:scaleX(0.9850);transform-origin:0 0;">Seed Round</div>
<div class="t" style="left:284.32px;top:912.25px;font-size:16.60px;line-height:16.60px;color:#000000;font-weight:normal;">$</div>
<div class="t" style="left:311.73px;top:912.25px;font-size:16.60px;line-height:16.60px;color:#000000;font-weight:normal;transform:scaleX(1.0600);transform-origin:0 0;">3,000,000.0</div>
<div class="t" style="left:75.76px;top:936.25px;font-size:16.60px;line-height:16.60px;color:#000000;font-weight:normal;transform:scaleX(0.9850);transform-origin:0 0;">Series A</div>
<div class="t" style="left:284.32px;top:936.25px;font-size:16.60px;line-height:16.60px;color:#000000;font-weight:normal;">$</div>
<div class="t" style="left:301.95px;top:936.25px;font-size:16.60px;line-height:16.60px;color:#000000;font-weight:normal;transform:scaleX(1.0600);transform-origin:0 0;">15,000,000.0</div>
<div class="t" style="left:76.13px;top:960.25px;font-size:16.60px;line-height:16.60px;color:#000000;font-weight:normal;transform:scaleX(0.9850);transform-origin:0 0;">Total Funding</div>
<div class="t" style="left:284.32px;top:960.25px;font-size:16.60px;line-height:16.60px;color:#000000;font-weight:normal;">$</div>
<div class="t" style="left:301.95px;top:960.25px;font-size:16.60px;line-height:16.60px;color:#000000;font-weight:normal;transform:scaleX(1.0600);transform-origin:0 0;">21,000,000.0</div>
<div class="r" style="left:56.00px;top:952.00px;width:361.50px;height:4.00px;background:#243858;"></div>
<div class="r" style="left:56.00px;top:976.00px;width:361.50px;height:2.00px;background:#243858;"></div>
<div class="r" style="left:56.00px;top:979.50px;width:361.50px;height:2.20px;background:#243858;"></div>
<div class="t" style="left:61.68px;top:1008.05px;font-size:18.60px;line-height:18.60px;color:#243858;font-weight:bold;transform:scaleX(0.9031);transform-origin:0 0;">PROFITABILITY MILESTONES</div>
<div class="r" style="left:56.00px;top:1028.00px;width:1226.00px;height:4.00px;background:#243858;"></div>
<div class="t" style="left:75.19px;top:1035.90px;font-size:16.42px;line-height:16.42px;color:#000000;font-weight:normal;transform:scaleX(0.9754);transform-origin:0 0;">EBITDA Positive</div>
<div class="t" style="left:371.37px;top:1035.90px;font-size:16.42px;line-height:16.42px;color:#243858;font-weight:bold;transform:scaleX(1.1030);transform-origin:0 0;">2029</div>
<svg class="r" style="left:421.00px;top:1037.80px;" width="18.00" height="17.00" viewBox="0 0 18 17"><path d="M3 9 L8 14.5 L15.5 2.5" fill="none" stroke="#3f8a56" stroke-width="2.8" stroke-linecap="round" stroke-linejoin="round"/></svg>
<div class="t" style="left:75.13px;top:1065.90px;font-size:16.42px;line-height:16.42px;color:#000000;font-weight:normal;transform:scaleX(1.0133);transform-origin:0 0;">Net Income Positive</div>
<div class="t" style="left:371.37px;top:1065.90px;font-size:16.42px;line-height:16.42px;color:#243858;font-weight:bold;transform:scaleX(1.1030);transform-origin:0 0;">2029</div>
<svg class="r" style="left:421.00px;top:1067.80px;" width="18.00" height="17.00" viewBox="0 0 18 17"><path d="M3 9 L8 14.5 L15.5 2.5" fill="none" stroke="#3f8a56" stroke-width="2.8" stroke-linecap="round" stroke-linejoin="round"/></svg>
<div class="t" style="left:436.39px;top:1127.45px;font-size:33.14px;line-height:33.14px;color:#1f3a5f;font-weight:bold;transform:scaleX(1.1771);transform-origin:0 0;">Revenue &amp; Profitability Trajectory</div>
<svg class="r" style="left:0.00px;top:0.00px;" width="1300.00" height="1690.00" viewBox="0 0 1300 1690"><rect x="267" y="1603.96" width="126" height="30.5356" fill="#42546e"/><rect x="476.75" y="1549.01" width="126" height="85.4885" fill="#42546e"/><rect x="686.5" y="1463.42" width="126" height="171.076" fill="#42546e"/><rect x="896.25" y="1348.68" width="126" height="285.821" fill="#42546e"/><rect x="1106" y="1207.73" width="126" height="426.773" fill="#42546e"/><line x1="220" y1="1555.3" x2="1280" y2="1555.3" stroke="rgb(164,164,164)" stroke-opacity="0.3" stroke-width="2"/><line x1="220" y1="1476.1" x2="1280" y2="1476.1" stroke="rgb(164,164,164)" stroke-opacity="0.3" stroke-width="2"/><line x1="220" y1="1396.9" x2="1280" y2="1396.9" stroke="rgb(164,164,164)" stroke-opacity="0.3" stroke-width="2"/><line x1="220" y1="1317.7" x2="1280" y2="1317.7" stroke="rgb(164,164,164)" stroke-opacity="0.3" stroke-width="2"/><line x1="220" y1="1238.5" x2="1280" y2="1238.5" stroke="rgb(164,164,164)" stroke-opacity="0.3" stroke-width="2"/><line x1="218.3" y1="1185" x2="218.3" y2="1666.6" stroke="#000" stroke-width="2.4"/><line x1="217" y1="1665.6" x2="1280.5" y2="1665.6" stroke="#000" stroke-width="2.4"/><line x1="209.6" y1="1634.5" x2="218" y2="1634.5" stroke="#000" stroke-width="2"/><line x1="209.6" y1="1555.3" x2="218" y2="1555.3" stroke="#000" stroke-width="2"/><line x1="209.6" y1="1476.1" x2="218" y2="1476.1" stroke="#000" stroke-width="2"/><line x1="209.6" y1="1396.9" x2="218" y2="1396.9" stroke="#000" stroke-width="2"/><line x1="209.6" y1="1317.7" x2="218" y2="1317.7" stroke="#000" stroke-width="2"/><line x1="209.6" y1="1238.5" x2="218" y2="1238.5" stroke="#000" stroke-width="2"/><line x1="330" y1="1666" x2="330" y2="1675" stroke="#000" stroke-width="2"/><line x1="539.75" y1="1666" x2="539.75" y2="1675" stroke="#000" stroke-width="2"/><line x1="749.5" y1="1666" x2="749.5" y2="1675" stroke="#000" stroke-width="2"/><line x1="959.25" y1="1666" x2="959.25" y2="1675" stroke="#000" stroke-width="2"/><line x1="1169" y1="1666" x2="1169" y2="1675" stroke="#000" stroke-width="2"/><polyline points="330,1639.08 539.75,1640.91 749.5,1634.5 959.25,1613.06 1169,1570.48" fill="none" stroke="#e08a4a" stroke-width="5.6" stroke-linejoin="round"/><circle cx="330" cy="1639.08" r="9.8" fill="#e08a4a"/><circle cx="539.75" cy="1640.91" r="9.8" fill="#e08a4a"/><circle cx="749.5" cy="1634.5" r="9.8" fill="#e08a4a"/><circle cx="959.25" cy="1613.06" r="9.8" fill="#e08a4a"/><circle cx="1169" cy="1570.48" r="9.8" fill="#e08a4a"/><polyline points="330,1641.67 539.75,1644.6 749.5,1639.9 959.25,1623.65 1169,1592.23" fill="none" stroke="#4a8a5c" stroke-width="4.8" stroke-dasharray="18.2 8.2"/><rect x="321.5" y="1633.17" width="17" height="17" fill="#4a8a5c"/><rect x="531.25" y="1636.1" width="17" height="17" fill="#4a8a5c"/><rect x="741" y="1631.4" width="17" height="17" fill="#4a8a5c"/><rect x="950.75" y="1615.15" width="17" height="17" fill="#4a8a5c"/><rect x="1160.5" y="1583.73" width="17" height="17" fill="#4a8a5c"/><line x1="219" y1="1634.5" x2="1280" y2="1634.5" stroke="#999999" stroke-width="2"/><rect x="230.5" y="1196.5" width="209" height="109" rx="4" fill="#ffffff" fill-opacity="0.85" stroke="#cccccc" stroke-width="2"/><line x1="236" y1="1216.6" x2="287.8" y2="1216.6" stroke="#e08a4a" stroke-width="5.6"/><circle cx="262" cy="1216.6" r="9.8" fill="#e08a4a"/><line x1="238.2" y1="1250.7" x2="283.5" y2="1250.7" stroke="#4a8a5c" stroke-width="4.6"/><rect x="253" y="1242.3" width="17" height="17" fill="#4a8a5c"/><rect x="238" y="1277.4" width="46" height="15.6" fill="#42546e"/></svg>
<div class="t" style="left:302.14px;top:1204.00px;font-size:23.98px;line-height:23.98px;color:#1a1a1a;font-weight:normal;transform:scaleX(0.9456);transform-origin:0 0;">EBITDA</div>
<div class="t" style="left:300.91px;top:1237.50px;font-size:23.98px;line-height:23.98px;color:#1a1a1a;font-weight:normal;transform:scaleX(1.0619);transform-origin:0 0;">Net Income</div>
<div class="t" style="left:302.30px;top:1272.60px;font-size:23.98px;line-height:23.98px;color:#1a1a1a;font-weight:normal;transform:scaleX(1.0186);transform-origin:0 0;">Revenue</div>
<div class="t" style="left:124.70px;top:1621.48px;font-size:26.60px;line-height:26.60px;color:#000000;font-weight:normal;transform:scaleX(1.0356);transform-origin:0 0;">$0.0M</div>
<div class="t" style="left:126.51px;top:1542.28px;font-size:26.60px;line-height:26.60px;color:#000000;font-weight:normal;transform:scaleX(1.0104);transform-origin:0 0;">$2.0M</div>
<div class="t" style="left:126.51px;top:1463.08px;font-size:26.60px;line-height:26.60px;color:#000000;font-weight:normal;transform:scaleX(1.0104);transform-origin:0 0;">$4.0M</div>
<div class="t" style="left:126.51px;top:1383.88px;font-size:26.60px;line-height:26.60px;color:#000000;font-weight:normal;transform:scaleX(1.0104);transform-origin:0 0;">$6.0M</div>
<div class="t" style="left:126.51px;top:1304.68px;font-size:26.60px;line-height:26.60px;color:#000000;font-weight:normal;transform:scaleX(1.0104);transform-origin:0 0;">$8.0M</div>
<div class="t" style="left:109.71px;top:1225.48px;font-size:26.60px;line-height:26.60px;color:#000000;font-weight:normal;transform:scaleX(1.0319);transform-origin:0 0;">$10.0M</div>
<div class="t" style="left:84px;top:1427px;font-size:27.5px;line-height:28px;color:#333333;transform:translate(-50%,-50%) rotate(-90deg);">$ Millions</div>
<div class="t" style="left:300.44px;top:1679.57px;font-size:26.50px;line-height:26.50px;color:#000000;font-weight:normal;">2026</div>
<div class="t" style="left:510.27px;top:1679.57px;font-size:26.50px;line-height:26.50px;color:#000000;font-weight:normal;">2027</div>
<div class="t" style="left:719.93px;top:1679.57px;font-size:26.50px;line-height:26.50px;color:#000000;font-weight:normal;">2028</div>
<div class="t" style="left:929.74px;top:1679.57px;font-size:26.50px;line-height:26.50px;color:#000000;font-weight:normal;">2029</div>
<div class="t" style="left:1139.38px;top:1679.57px;font-size:26.50px;line-height:26.50px;color:#000000;font-weight:normal;">2030</div>
<div class="r" style="left:1886px;top:852px;width:82px;height:34px;box-sizing:border-box;border:4px solid #376f47;"></div>
<div class="r" style="left:1958.00px;top:876.00px;width:14.00px;height:14.00px;background:#ffffff;"></div>
<div class="r" style="left:1960.00px;top:878.00px;width:10.00px;height:10.00px;background:#376f47;"></div>
<div class="r" style="left:44px;top:1670px;width:2940px;height:14px;border-radius:7px;background:rgba(160,160,160,0.53);"></div>
<div class="r" style="left:0.00px;top:1690.00px;width:3024.00px;height:56.00px;background:#333333;"></div>
<div class="r" style="left:0.00px;top:1689.50px;width:3024.00px;height:2.50px;background:#585858;"></div>
<div class="r" style="left:0.00px;top:1741.00px;width:3024.00px;height:2.00px;background:#0a0a0a;"></div>
<div class="r" style="left:0.00px;top:1743.00px;width:3024.00px;height:3.00px;background:#3a3a3a;"></div>
<div class="r" style="left:2.00px;top:1692.00px;width:119.00px;height:49.00px;background:#2e2e2e;"></div>
<svg class="r" style="left:28.00px;top:1706.00px;" width="18.00" height="24.00" viewBox="0 0 18 24"><path d="M15 2 V22 L2 12Z" fill="#6a6a6a"/></svg>
<svg class="r" style="left:74.00px;top:1706.00px;" width="18.00" height="24.00" viewBox="0 0 18 24"><path d="M3 2 V22 L16 12Z" fill="#6a6a6a"/></svg>
<div class="r" style="left:314.00px;top:1692.00px;width:624.50px;height:49.00px;background:#1f1f1f;"></div>
<div class="r" style="left:530.00px;top:1696.00px;width:2.00px;height:42.00px;background:#4a4a4a;"></div>
<div class="r" style="left:779.60px;top:1696.00px;width:2.00px;height:42.00px;background:#4a4a4a;"></div>
<div class="r" style="left:937.50px;top:1696.00px;width:2.00px;height:42.00px;background:#4a4a4a;"></div>
<div class="r" style="left:939.50px;top:1692.00px;width:74.50px;height:49.00px;background:#2e2e2e;"></div>
<div class="r" style="left:1013.00px;top:1696.00px;width:2.00px;height:42.00px;background:#4a4a4a;"></div>
<div class="r" style="left:121px;top:1690px;width:193px;height:44.5px;background:linear-gradient(#ffffff,#f6f6f6);border-radius:0 0 8px 8px;box-shadow:0 1px 0 #777;"></div>
<div class="t" style="left:154.37px;top:1703.58px;font-size:24.13px;line-height:24.13px;color:#3b8a52;font-weight:bold;transform:scaleX(1.0096);transform-origin:0 0;">Dashboard</div>
<div class="t" style="left:350.43px;top:1703.58px;font-size:24.13px;line-height:24.13px;color:#8c8c8c;font-weight:bold;transform:scaleX(0.9455);transform-origin:0 0;">Assumptions</div>
<div class="t" style="left:566.39px;top:1703.58px;font-size:24.13px;line-height:24.13px;color:#8c8c8c;font-weight:bold;">Revenue-Model</div>
<div class="t" style="left:835.42px;top:1703.58px;font-size:24.13px;line-height:24.13px;color:#8c8c8c;font-weight:bold;transform:scaleX(0.9804);transform-origin:0 0;">P&amp;L</div>
<div class="r" style="left:966.00px;top:1714.50px;width:22.00px;height:3.00px;background:#e8e8e8;"></div>
<div class="r" style="left:975.50px;top:1705.00px;width:3.00px;height:22.00px;background:#e8e8e8;"></div>
<div class="r" style="left:2386.00px;top:1741.00px;width:74.00px;height:5.00px;background:#4a4a4a;"></div>
</div></body></html>
